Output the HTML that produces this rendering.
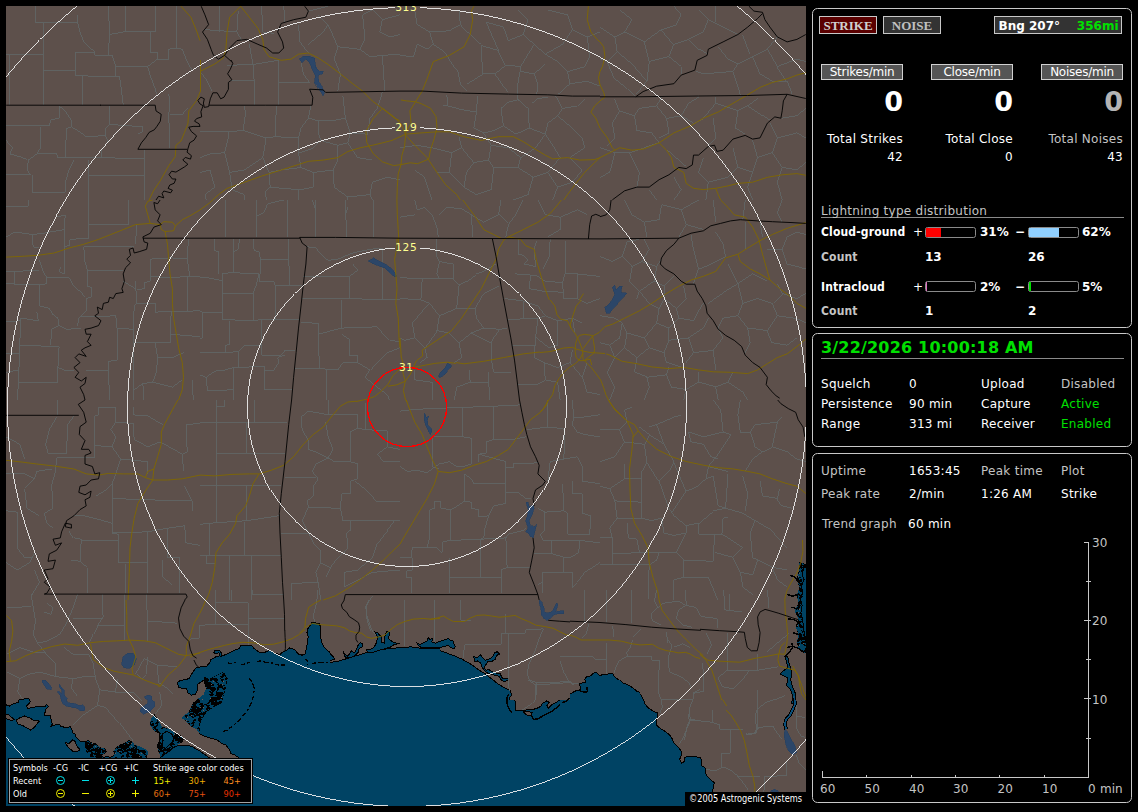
<!DOCTYPE html>
<html><head><meta charset="utf-8"><title>Lightning Detector</title>
<style>
html,body{margin:0;padding:0;background:#000;width:1138px;height:812px;overflow:hidden}
svg{display:block;position:absolute;left:0;top:0}
text{font-family:"DejaVu Sans","Liberation Sans",sans-serif;font-size:12px;fill:#fff}
text{letter-spacing:.27px}
.b{font-weight:bold;letter-spacing:0}
.c{font-family:"DejaVu Sans Condensed","DejaVu Sans",sans-serif;letter-spacing:.15px}
.g{fill:#c4c4c4}
.gr{fill:#00e000}
.lg text{font-family:"DejaVu Sans Condensed","DejaVu Sans","Liberation Sans",sans-serif;font-size:9.1px;letter-spacing:0}
.ax text{fill:#c4c4c4;letter-spacing:0}
.rl{font-size:10.6px;fill:#ffff90;letter-spacing:.65px}
.e{text-anchor:end}
.m{text-anchor:middle}
</style></head><body>
<svg width="1138" height="812" viewBox="0 0 1138 812">
<g id="map">
<defs><clipPath id="mapclip"><rect x="6" y="6" width="800" height="800"/></clipPath>
<pattern id="marsh" width="36" height="36" patternUnits="userSpaceOnUse"><rect width="36" height="36" fill="#004364"/><rect x="1" y="0" width="2" height="1" fill="#000"/><rect x="4" y="0" width="3" height="1" fill="#000"/><rect x="13" y="0" width="3" height="1" fill="#000"/><rect x="18" y="0" width="4" height="1" fill="#000"/><rect x="23" y="0" width="11" height="1" fill="#000"/><rect x="2" y="1" width="4" height="1" fill="#000"/><rect x="7" y="1" width="2" height="1" fill="#000"/><rect x="13" y="1" width="1" height="1" fill="#000"/><rect x="19" y="1" width="1" height="1" fill="#000"/><rect x="24" y="1" width="10" height="1" fill="#000"/><rect x="2" y="2" width="5" height="1" fill="#000"/><rect x="12" y="2" width="3" height="1" fill="#000"/><rect x="20" y="2" width="2" height="1" fill="#000"/><rect x="24" y="2" width="7" height="1" fill="#000"/><rect x="1" y="3" width="6" height="1" fill="#000"/><rect x="8" y="3" width="2" height="1" fill="#000"/><rect x="11" y="3" width="3" height="1" fill="#000"/><rect x="19" y="3" width="2" height="1" fill="#000"/><rect x="23" y="3" width="3" height="1" fill="#000"/><rect x="27" y="3" width="8" height="1" fill="#000"/><rect x="1" y="4" width="2" height="1" fill="#000"/><rect x="6" y="4" width="4" height="1" fill="#000"/><rect x="13" y="4" width="1" height="1" fill="#000"/><rect x="20" y="4" width="16" height="1" fill="#000"/><rect x="1" y="5" width="2" height="1" fill="#000"/><rect x="7" y="5" width="3" height="1" fill="#000"/><rect x="12" y="5" width="2" height="1" fill="#000"/><rect x="22" y="5" width="2" height="1" fill="#000"/><rect x="30" y="5" width="6" height="1" fill="#000"/><rect x="1" y="6" width="1" height="1" fill="#000"/><rect x="10" y="6" width="3" height="1" fill="#000"/><rect x="19" y="6" width="2" height="1" fill="#000"/><rect x="22" y="6" width="2" height="1" fill="#000"/><rect x="31" y="6" width="4" height="1" fill="#000"/><rect x="0" y="7" width="1" height="1" fill="#000"/><rect x="9" y="7" width="3" height="1" fill="#000"/><rect x="18" y="7" width="6" height="1" fill="#000"/><rect x="29" y="7" width="2" height="1" fill="#000"/><rect x="32" y="7" width="2" height="1" fill="#000"/><rect x="0" y="8" width="7" height="1" fill="#000"/><rect x="10" y="8" width="2" height="1" fill="#000"/><rect x="17" y="8" width="2" height="1" fill="#000"/><rect x="22" y="8" width="1" height="1" fill="#000"/><rect x="30" y="8" width="3" height="1" fill="#000"/><rect x="0" y="9" width="10" height="1" fill="#000"/><rect x="11" y="9" width="3" height="1" fill="#000"/><rect x="31" y="9" width="2" height="1" fill="#000"/><rect x="0" y="10" width="7" height="1" fill="#000"/><rect x="12" y="10" width="2" height="1" fill="#000"/><rect x="29" y="10" width="5" height="1" fill="#000"/><rect x="0" y="11" width="6" height="1" fill="#000"/><rect x="7" y="11" width="1" height="1" fill="#000"/><rect x="11" y="11" width="4" height="1" fill="#000"/><rect x="30" y="11" width="3" height="1" fill="#000"/><rect x="35" y="11" width="1" height="1" fill="#000"/><rect x="1" y="12" width="5" height="1" fill="#000"/><rect x="7" y="12" width="2" height="1" fill="#000"/><rect x="11" y="12" width="5" height="1" fill="#000"/><rect x="0" y="13" width="5" height="1" fill="#000"/><rect x="7" y="13" width="3" height="1" fill="#000"/><rect x="13" y="13" width="4" height="1" fill="#000"/><rect x="31" y="13" width="5" height="1" fill="#000"/><rect x="0" y="14" width="6" height="1" fill="#000"/><rect x="7" y="14" width="4" height="1" fill="#000"/><rect x="14" y="14" width="2" height="1" fill="#000"/><rect x="31" y="14" width="5" height="1" fill="#000"/><rect x="0" y="15" width="4" height="1" fill="#000"/><rect x="8" y="15" width="3" height="1" fill="#000"/><rect x="13" y="15" width="3" height="1" fill="#000"/><rect x="17" y="15" width="2" height="1" fill="#000"/><rect x="30" y="15" width="6" height="1" fill="#000"/><rect x="0" y="16" width="1" height="1" fill="#000"/><rect x="11" y="16" width="2" height="1" fill="#000"/><rect x="14" y="16" width="6" height="1" fill="#000"/><rect x="29" y="16" width="7" height="1" fill="#000"/><rect x="0" y="17" width="1" height="1" fill="#000"/><rect x="3" y="17" width="2" height="1" fill="#000"/><rect x="11" y="17" width="9" height="1" fill="#000"/><rect x="29" y="17" width="5" height="1" fill="#000"/><rect x="35" y="17" width="1" height="1" fill="#000"/><rect x="0" y="18" width="5" height="1" fill="#000"/><rect x="9" y="18" width="1" height="1" fill="#000"/><rect x="11" y="18" width="9" height="1" fill="#000"/><rect x="28" y="18" width="2" height="1" fill="#000"/><rect x="31" y="18" width="5" height="1" fill="#000"/><rect x="0" y="19" width="6" height="1" fill="#000"/><rect x="10" y="19" width="2" height="1" fill="#000"/><rect x="13" y="19" width="4" height="1" fill="#000"/><rect x="20" y="19" width="3" height="1" fill="#000"/><rect x="27" y="19" width="2" height="1" fill="#000"/><rect x="31" y="19" width="5" height="1" fill="#000"/><rect x="0" y="20" width="6" height="1" fill="#000"/><rect x="10" y="20" width="1" height="1" fill="#000"/><rect x="12" y="20" width="4" height="1" fill="#000"/><rect x="19" y="20" width="4" height="1" fill="#000"/><rect x="24" y="20" width="3" height="1" fill="#000"/><rect x="31" y="20" width="5" height="1" fill="#000"/><rect x="0" y="21" width="6" height="1" fill="#000"/><rect x="7" y="21" width="2" height="1" fill="#000"/><rect x="13" y="21" width="3" height="1" fill="#000"/><rect x="21" y="21" width="3" height="1" fill="#000"/><rect x="26" y="21" width="4" height="1" fill="#000"/><rect x="34" y="21" width="2" height="1" fill="#000"/><rect x="0" y="22" width="4" height="1" fill="#000"/><rect x="7" y="22" width="3" height="1" fill="#000"/><rect x="11" y="22" width="6" height="1" fill="#000"/><rect x="20" y="22" width="4" height="1" fill="#000"/><rect x="27" y="22" width="2" height="1" fill="#000"/><rect x="33" y="22" width="2" height="1" fill="#000"/><rect x="1" y="23" width="3" height="1" fill="#000"/><rect x="8" y="23" width="2" height="1" fill="#000"/><rect x="11" y="23" width="8" height="1" fill="#000"/><rect x="20" y="23" width="3" height="1" fill="#000"/><rect x="27" y="23" width="3" height="1" fill="#000"/><rect x="8" y="24" width="2" height="1" fill="#000"/><rect x="12" y="24" width="4" height="1" fill="#000"/><rect x="17" y="24" width="6" height="1" fill="#000"/><rect x="26" y="24" width="5" height="1" fill="#000"/><rect x="7" y="25" width="15" height="1" fill="#000"/><rect x="26" y="25" width="2" height="1" fill="#000"/><rect x="6" y="26" width="4" height="1" fill="#000"/><rect x="11" y="26" width="10" height="1" fill="#000"/><rect x="27" y="26" width="2" height="1" fill="#000"/><rect x="6" y="27" width="15" height="1" fill="#000"/><rect x="25" y="27" width="2" height="1" fill="#000"/><rect x="28" y="27" width="1" height="1" fill="#000"/><rect x="4" y="28" width="4" height="1" fill="#000"/><rect x="9" y="28" width="1" height="1" fill="#000"/><rect x="13" y="28" width="6" height="1" fill="#000"/><rect x="21" y="28" width="1" height="1" fill="#000"/><rect x="23" y="28" width="3" height="1" fill="#000"/><rect x="27" y="28" width="2" height="1" fill="#000"/><rect x="5" y="29" width="2" height="1" fill="#000"/><rect x="10" y="29" width="4" height="1" fill="#000"/><rect x="15" y="29" width="3" height="1" fill="#000"/><rect x="19" y="29" width="12" height="1" fill="#000"/><rect x="0" y="30" width="1" height="1" fill="#000"/><rect x="4" y="30" width="1" height="1" fill="#000"/><rect x="9" y="30" width="6" height="1" fill="#000"/><rect x="16" y="30" width="13" height="1" fill="#000"/><rect x="30" y="30" width="6" height="1" fill="#000"/><rect x="0" y="31" width="2" height="1" fill="#000"/><rect x="5" y="31" width="3" height="1" fill="#000"/><rect x="9" y="31" width="3" height="1" fill="#000"/><rect x="14" y="31" width="6" height="1" fill="#000"/><rect x="23" y="31" width="6" height="1" fill="#000"/><rect x="30" y="31" width="6" height="1" fill="#000"/><rect x="0" y="32" width="2" height="1" fill="#000"/><rect x="5" y="32" width="2" height="1" fill="#000"/><rect x="11" y="32" width="2" height="1" fill="#000"/><rect x="14" y="32" width="2" height="1" fill="#000"/><rect x="19" y="32" width="2" height="1" fill="#000"/><rect x="23" y="32" width="1" height="1" fill="#000"/><rect x="25" y="32" width="4" height="1" fill="#000"/><rect x="30" y="32" width="2" height="1" fill="#000"/><rect x="34" y="32" width="2" height="1" fill="#000"/><rect x="0" y="33" width="1" height="1" fill="#000"/><rect x="6" y="33" width="2" height="1" fill="#000"/><rect x="12" y="33" width="2" height="1" fill="#000"/><rect x="19" y="33" width="9" height="1" fill="#000"/><rect x="35" y="33" width="1" height="1" fill="#000"/><rect x="0" y="34" width="2" height="1" fill="#000"/><rect x="18" y="34" width="3" height="1" fill="#000"/><rect x="22" y="34" width="9" height="1" fill="#000"/><rect x="2" y="35" width="1" height="1" fill="#000"/><rect x="14" y="35" width="2" height="1" fill="#000"/><rect x="18" y="35" width="3" height="1" fill="#000"/><rect x="24" y="35" width="8" height="1" fill="#000"/><rect x="20" y="23" width="1" height="1" fill="#6b5c55"/><rect x="30" y="14" width="1" height="1" fill="#6b5c55"/><rect x="33" y="33" width="1" height="1" fill="#6b5c55"/><rect x="31" y="0" width="1" height="1" fill="#6b5c55"/><rect x="23" y="26" width="1" height="1" fill="#6b5c55"/><rect x="6" y="0" width="1" height="1" fill="#6b5c55"/><rect x="22" y="15" width="1" height="1" fill="#6b5c55"/><rect x="23" y="23" width="1" height="1" fill="#6b5c55"/><rect x="19" y="13" width="1" height="1" fill="#6b5c55"/><rect x="3" y="20" width="1" height="1" fill="#6b5c55"/><rect x="11" y="31" width="1" height="1" fill="#6b5c55"/><rect x="7" y="33" width="1" height="1" fill="#6b5c55"/><rect x="22" y="3" width="1" height="1" fill="#6b5c55"/><rect x="5" y="13" width="1" height="1" fill="#6b5c55"/></pattern>
<clipPath id="k0"><rect x="0" y="660" width="130" height="100"/></clipPath>
<clipPath id="k1"><rect x="130" y="660" width="130" height="100"/></clipPath>
<clipPath id="k2"><rect x="190" y="630" width="140" height="30"/></clipPath>
<clipPath id="k3"><rect x="260" y="660" width="70" height="70"/></clipPath>
<clipPath id="k4"><rect x="330" y="600" width="110" height="100"/></clipPath>
<clipPath id="k5"><rect x="300" y="600" width="30" height="30"/></clipPath>
<clipPath id="k6"><rect x="440" y="600" width="130" height="100"/></clipPath>
<clipPath id="k7"><rect x="500" y="700" width="70" height="80"/></clipPath>
<clipPath id="k8"><rect x="570" y="680" width="70" height="100"/></clipPath>
<clipPath id="k9"><rect x="570" y="640" width="130" height="40"/></clipPath>
<clipPath id="k10"><rect x="640" y="680" width="60" height="60"/></clipPath>
<clipPath id="k11"><rect x="640" y="740" width="120" height="66"/></clipPath>
</defs>
<g clip-path="url(#mapclip)" shape-rendering="crispEdges">
<rect x="6" y="6" width="800" height="800" fill="#5d504b"/>
<path clip-path="url(#k0)" d="M4.9 704.3 L9.2 706.2 L13.5 703.7 L18.5 702.5 L19.1 699.4 L22.2 700 L24.6 698.4 L28.9 698.8 L30.2 701.3 L28.9 703.7 L26.5 706.2 L27.7 708.6 L32 707.4 L38.2 706.5 L45.6 706.2 L46.2 704.1 L48.6 706.5 L46.2 708.6 L44.9 712.9 L44.3 716 L47.4 715.4 L50.5 715.4 L51.1 719.1 L52.3 724 L50.5 726.5 L54.2 725.3 L59.1 724 L61 726.5 L64 727.1 L67.1 727.7 L70.2 726.5 L72 729.6 L72.7 732.7 L75.1 733.9 L76.3 737.6 L78.8 740 L81.3 741.9 L85 741.3 L88.7 740.7 L91.7 743.1 L95.4 743.7 L97.9 746.2 L101 748 L104.7 748.7 L106.5 751.7 L104.1 753.6 L101 754.8 L103.4 757.3 L107.1 756.7 L110.8 757.3 L114.5 754.8 L113.9 751.1 L116.4 748 L120.1 745 L123.1 744.3 L126.2 742.5 L128.7 740.7 L132.4 741.3 L135.5 743.7 L140 745 L145.3 745 L145.3 770.8 L-4.9 770.8 L-4.9 704.3Z" fill="#004364" stroke="#000" stroke-width="1"/>
<path d="M16 720.3 L19.7 717.9 L24.6 716 L29.6 717.9 L33.9 720.3 L39.4 721 L36.9 724 L34.5 727.1 L30.8 730.2 L26.5 727.7 L22.2 725.3 L17.9 724.0Z" fill="#5d504b" stroke="#000" stroke-width="1"/>
<path d="M4.9 713.6 L8.6 714.8 L12.3 717.9 L14.2 719.7 L11.1 720.6 L7.4 719.1 L4.9 718.5Z" fill="#5d504b" stroke="#000" stroke-width="1"/>
<path d="M65.3 742.5 L69 743.7 L72.7 740 L75.1 741.3 L77 746.2 L80 749.9 L76.3 751.7 L72.7 751.1 L69 748 L66.5 745.0Z" fill="#5d504b" stroke="#000" stroke-width="1"/>
<path clip-path="url(#k1)" d="M211.7 657.5 L262.8 657.5 L262.8 762.2 L238.2 762.2 L238.2 757.3 L234.5 754.8 L230.8 753.6 L229.6 749.9 L225.9 745 L222.2 743.7 L217.3 740 L213.6 738.8 L208.7 737.6 L205 736.3 L200 733.9 L198.8 726.5 L201.3 719.1 L206.2 711.7 L213.6 706.8 L221 703.1 L224.7 690.8 L227.1 678.5 L223.4 672.3 L216 676 L208.7 679.7 L205 677.2 L204.3 680.3 L201.3 681.5 L197.6 684.6 L197 691.4 L195.1 694.5 L191.4 695.1 L187.7 692.6 L186.5 688.3 L182.8 688.9 L178.5 687.1 L177.3 682.8 L180.3 680.3 L185.3 679.7 L189 678.5 L192.7 672.3 L196.3 667.4 L201.3 666.8 L206.2 666.8 L209.9 662.5Z" fill="#004364" stroke="#000" stroke-width="1"/>
<path clip-path="url(#k1)" d="M205 677.2 L208.7 679.7 L216 676 L223.4 672.3 L227.1 678.5 L224.7 690.8 L221 703.1 L213.6 706.8 L206.2 711.7 L201.3 719.1 L198.8 726.5 L200 733.9 L196.3 729 L191.4 726.5 L186.5 721.6 L181.6 717.9 L184 715.4 L189 711.7 L192.7 703.1 L198.8 698.2 L203.7 694.5 L206.2 688.3 L204.3 683.4Z" fill="url(#marsh)" stroke="none" stroke-width="1"/>
<path clip-path="url(#k1)" d="M149.6 724 L151.4 717.9 L154.5 714.2 L156.9 717.9 L161.9 726.5 L169.3 729 L174.2 732.7 L180.3 735.1 L184 740 L181.6 742.5 L175.4 746.2 L169.3 751.1 L160.6 757.3 L158.2 751.1 L156.9 745 L159.4 740 L159.4 733.9 L153.2 730.2Z" fill="url(#marsh)" stroke="none" stroke-width="1"/>
<path clip-path="url(#k1)" d="M161.9 733.9 L166.8 731.4 L171.7 733.9 L174.2 738.8 L170.5 743.7 L165.6 748.7 L161.9 746.2 L163.1 740.0Z" fill="#004364" stroke="#000" stroke-width="1"/>
<path clip-path="url(#k1)" d="M160.6 762.2 L160.6 757.3 L169.3 751.1 L175.4 746.2 L184 745 L191.4 746.2 L200 751.1 L208.7 757.3 L216 762.2Z" fill="#004364" stroke="#000" stroke-width="1"/>
<path clip-path="url(#k1)" d="M117.5 745 L124.9 743.7 L128.6 741.3 L132.3 741.3 L134.8 745 L139.7 746.2 L144.6 748.7 L148.3 751.7 L147.1 757.3 L145.9 762.2 L117.5 762.2Z" fill="url(#marsh)" stroke="none" stroke-width="1"/>
<path clip-path="url(#k2)" d="M187.5 674.3 L190 673.1 L192.5 669.4 L197.4 666.9 L204.8 666.3 L208.5 663.2 L210.9 659.6 L216.5 656.5 L219.6 655.9 L218.9 652.8 L216.5 653.4 L213.4 652.8 L214.6 650.9 L219.6 650.3 L222 654 L220.8 656.5 L226.9 654 L233.1 650.9 L239.3 648.5 L240.5 645.4 L251.6 645.4 L254 648.5 L260.2 652.8 L265.1 652.2 L270 650.3 L275 653.4 L279.9 654.6 L282.4 652.2 L287.3 649.7 L289.7 647.9 L294.7 649.7 L298.4 654 L302.1 655.2 L305.1 654 L306.4 648.5 L307.6 642.3 L308.2 636.2 L307 632.5 L308.2 627.5 L320.5 627.5 L320.5 636.2 L321.8 642.3 L324.2 647.2 L326.7 649.7 L332.8 654.6 L332.8 732.2 L187.5 732.2Z" fill="#004364" stroke="#000" stroke-width="1"/>
<path clip-path="url(#k3)" d="M187.5 674.3 L190 673.1 L192.5 669.4 L197.4 666.9 L204.8 666.3 L208.5 663.2 L210.9 659.6 L216.5 656.5 L219.6 655.9 L218.9 652.8 L216.5 653.4 L213.4 652.8 L214.6 650.9 L219.6 650.3 L222 654 L220.8 656.5 L226.9 654 L233.1 650.9 L239.3 648.5 L240.5 645.4 L251.6 645.4 L254 648.5 L260.2 652.8 L265.1 652.2 L270 650.3 L275 653.4 L279.9 654.6 L282.4 652.2 L287.3 649.7 L289.7 647.9 L294.7 649.7 L298.4 654 L302.1 655.2 L305.1 654 L306.4 648.5 L307.6 642.3 L308.2 636.2 L307 632.5 L308.2 627.5 L320.5 627.5 L320.5 636.2 L321.8 642.3 L324.2 647.2 L326.7 649.7 L332.8 654.6 L332.8 732.2 L187.5 732.2Z" fill="#004364" stroke="#000" stroke-width="1"/>
<path clip-path="url(#k4)" d="M297.5 657.9 L304.9 661.6 L308.6 665.3 L312.3 664.3 L319.7 663 L327.1 662.6 L336.9 661.6 L343.1 659.7 L349.3 657.9 L355.4 656 L361.6 654.2 L367.7 652.3 L373.9 651.1 L380 649.9 L386.2 649 L392.4 648.3 L398.5 647.8 L404.7 647.4 L410.8 646.8 L417 647.8 L423.1 648.6 L429.3 648.3 L435.5 648.6 L442.8 649.3 L442.8 702.2 L297.5 702.2Z" fill="#004364" stroke="#000" stroke-width="1"/>
<path clip-path="url(#k4)" d="M297.5 651.1 L300 651.1 L303.7 652.9 L305.5 650.5 L306.2 645.6 L306.8 639.4 L308.6 633.2 L307.4 629.6 L309.2 626.5 L312.3 622.2 L314.8 622.8 L319.7 624 L320.9 629.6 L321.5 635.7 L320.3 640.6 L322.2 645.6 L326.5 647.4 L327.7 650.5 L330.8 654.2 L333.9 657.3 L334.5 659.7 L329.6 660.3 L324.6 661.6 L319.7 661 L314.8 663 L311.1 664 L307.4 664 L303.7 661 L297.5 657.9Z" fill="#004364" stroke="#000" stroke-width="1"/>
<path clip-path="url(#k5)" d="M297.5 657.9 L304.9 661.6 L308.6 665.3 L312.3 664.3 L319.7 663 L327.1 662.6 L336.9 661.6 L343.1 659.7 L349.3 657.9 L355.4 656 L361.6 654.2 L367.7 652.3 L373.9 651.1 L380 649.9 L386.2 649 L392.4 648.3 L398.5 647.8 L404.7 647.4 L410.8 646.8 L417 647.8 L423.1 648.6 L429.3 648.3 L435.5 648.6 L442.8 649.3 L442.8 702.2 L297.5 702.2Z" fill="#004364" stroke="#000" stroke-width="1"/>
<path clip-path="url(#k5)" d="M297.5 651.1 L300 651.1 L303.7 652.9 L305.5 650.5 L306.2 645.6 L306.8 639.4 L308.6 633.2 L307.4 629.6 L309.2 626.5 L312.3 622.2 L314.8 622.8 L319.7 624 L320.9 629.6 L321.5 635.7 L320.3 640.6 L322.2 645.6 L326.5 647.4 L327.7 650.5 L330.8 654.2 L333.9 657.3 L334.5 659.7 L329.6 660.3 L324.6 661.6 L319.7 661 L314.8 663 L311.1 664 L307.4 664 L303.7 661 L297.5 657.9Z" fill="#004364" stroke="#000" stroke-width="1"/>
<path clip-path="url(#k4)" d="M343.1 651.7 L344.9 654.2 L347.4 656 L349.3 654.2 L351.7 650.5 L354.2 652.9 L356.6 649.3 L357.9 645.6 L360.3 642.5 L362.8 643.7 L362.2 646.8 L359.1 648.6 L357.9 652.9 L354.2 656 L349.3 657.9 L345.6 657.9Z" fill="#004364" stroke="#000" stroke-width="1"/>
<path clip-path="url(#k4)" d="M366.5 649.9 L370.2 649.3 L373.9 647.4 L376.3 643.1 L377.6 636.9 L375.1 632 L377.6 632.6 L380 635.7 L381.3 636.9 L381.9 642.5 L384.3 643.1 L385 636.3 L386.2 632 L388.7 631.4 L389.9 634.5 L388 638.2 L392.4 641.9 L398.5 643.7 L393.6 644.9 L389.9 647.4 L385 648.6 L378.8 650.5 L372.7 652.3 L367.7 652.9Z" fill="#004364" stroke="#000" stroke-width="1"/>
<path clip-path="url(#k4)" d="M417 643.1 L420.1 644.3 L423.1 643.1 L426.8 641.3 L428.1 637.6 L429.9 639.4 L432.4 638.2 L431.8 641.9 L435.5 643.1 L440 641.3 L442.8 641.3 L442.8 647.4 L435.5 648 L428.1 647.4 L421.9 648 L418.2 645.6Z" fill="#004364" stroke="#000" stroke-width="1"/>
<path clip-path="url(#k6)" d="M427.5 647.4 L430 647.8 L437.4 649.9 L444.8 652.3 L454.6 656 L462 659.1 L470.6 664 L479.3 670.2 L485.4 673.9 L491.6 678.8 L497.7 683.7 L503.9 687.4 L510 690.5 L511.9 694.8 L510 697.3 L508.8 702.2 L427.5 702.2Z" fill="#004364" stroke="#000" stroke-width="1"/>
<path clip-path="url(#k6)" d="M427.5 641.3 L430 638.2 L431.8 640.6 L434.9 643.1 L438.6 641.9 L442.3 640.6 L446 639.4 L448.5 638.2 L450.3 640.6 L452.8 640 L453.4 643.1 L455.2 646.2 L454.6 648.6 L451.5 648 L448.5 645.6 L444.8 646.2 L441.1 647.4 L437.4 648.6 L433.7 648 L427.5 647.4Z" fill="#004364" stroke="#000" stroke-width="1"/>
<path clip-path="url(#k6)" d="M473.7 656.6 L476.8 657.9 L480.5 654.8 L482.3 657.3 L485.4 660.3 L489.1 659.1 L492.8 656.6 L494.6 652.9 L497.1 651.7 L499.6 654.2 L496.5 655.4 L495.3 659.1 L491.6 661.6 L487.9 661.6 L485.4 665.3 L484.2 667.7 L486 670.2 L489.1 669.6 L491.6 671.4 L496.5 673.3 L500.2 673.9 L502.7 678.8 L508.2 678.2 L508.8 680 L503.9 681.9 L501.4 680 L499 676.3 L494 675.1 L490.3 673.9 L486.6 672.7 L484.2 670.2 L481.7 666.5 L480.5 662.8 L477.4 661 L474.9 661.6Z" fill="#004364" stroke="#000" stroke-width="1"/>
<path d="M253 730 L330 730 L330 700 L500 700 L500 820 L253 820.0Z" fill="#004364" stroke="none" stroke-width="1"/>
<path d="M500 700 L570 700 L570 780 L500 780.0Z" fill="#004364" stroke="none" stroke-width="1"/>
<path clip-path="url(#k7)" d="M497.5 677.5 L497.5 684.9 L503.7 687.4 L507.4 691.1 L509.2 693.5 L512.3 695.4 L514.8 698.5 L515.4 704.6 L515.4 710.2 L520.9 710.8 L528.3 709.6 L535.7 708.9 L540.6 706.5 L542.5 703.4 L546.8 700.9 L549.3 702.2 L546.8 705.9 L548 708.3 L551.7 704.6 L556.6 702.2 L561.6 698.5 L569 694.8 L575.1 691.1 L580 689.9 L580 686.2 L578.8 683.7 L585 682.5 L586.2 677.5Z" fill="#5d504b" stroke="#000" stroke-width="1"/>
<path clip-path="url(#k7)" d="M618.2 677.5 L623.1 683.1 L628.1 684.9 L633 688 L636.7 691.1 L642.8 693.5 L642.8 677.5Z" fill="#5d504b" stroke="#000" stroke-width="1"/>
<path d="M570 680 L640 680 L640 780 L570 780.0Z" fill="#004364" stroke="none" stroke-width="1"/>
<path clip-path="url(#k8)" d="M497.5 677.5 L497.5 684.9 L503.7 687.4 L507.4 691.1 L509.2 693.5 L512.3 695.4 L514.8 698.5 L515.4 704.6 L515.4 710.2 L520.9 710.8 L528.3 709.6 L535.7 708.9 L540.6 706.5 L542.5 703.4 L546.8 700.9 L549.3 702.2 L546.8 705.9 L548 708.3 L551.7 704.6 L556.6 702.2 L561.6 698.5 L569 694.8 L575.1 691.1 L580 689.9 L580 686.2 L578.8 683.7 L585 682.5 L586.2 677.5Z" fill="#5d504b" stroke="#000" stroke-width="1"/>
<path clip-path="url(#k8)" d="M618.2 677.5 L623.1 683.1 L628.1 684.9 L633 688 L636.7 691.1 L642.8 693.5 L642.8 677.5Z" fill="#5d504b" stroke="#000" stroke-width="1"/>
<path d="M523.4 712 L528.3 711.4 L532 712.6 L531.4 715.7 L528.3 715.7 L525.2 713.9Z" fill="#5d504b" stroke="#000" stroke-width="1"/>
<path clip-path="url(#k9)" d="M557.5 697.9 L560 697.3 L566.2 694.2 L572.3 691.1 L578.5 689.3 L580.3 691.7 L584.6 692.9 L587.7 691.7 L586.5 688 L584 686.8 L579.7 686.2 L578.5 683.7 L582.8 683.1 L584.6 679.4 L586.5 676.9 L590.8 675.7 L593.2 673.2 L596.9 672.6 L599.4 675.7 L603.1 674.5 L609.3 673.9 L612.9 673.9 L614.2 676.3 L617.9 679.4 L622.8 682.5 L627.7 684.3 L632.7 687.4 L637.6 690.5 L641.3 695.4 L643.7 700.3 L645 704 L648.7 708.3 L653.6 711.4 L657.3 712.7 L657.9 716.3 L656 720 L656.7 725 L659.7 728 L664.7 731.1 L669.6 734.8 L672.1 738.5 L672.7 742.2 L557.5 742.2Z" fill="#004364" stroke="#000" stroke-width="1"/>
<path clip-path="url(#k10)" d="M557.5 697.9 L560 697.3 L566.2 694.2 L572.3 691.1 L578.5 689.3 L580.3 691.7 L584.6 692.9 L587.7 691.7 L586.5 688 L584 686.8 L579.7 686.2 L578.5 683.7 L582.8 683.1 L584.6 679.4 L586.5 676.9 L590.8 675.7 L593.2 673.2 L596.9 672.6 L599.4 675.7 L603.1 674.5 L609.3 673.9 L612.9 673.9 L614.2 676.3 L617.9 679.4 L622.8 682.5 L627.7 684.3 L632.7 687.4 L637.6 690.5 L641.3 695.4 L643.7 700.3 L645 704 L648.7 708.3 L653.6 711.4 L657.3 712.7 L657.9 716.3 L656 720 L656.7 725 L659.7 728 L664.7 731.1 L669.6 734.8 L672.1 738.5 L672.7 742.2 L557.5 742.2Z" fill="#004364" stroke="#000" stroke-width="1"/>
<path d="M500 780 L640 780 L640 820 L500 820.0Z" fill="#004364" stroke="none" stroke-width="1"/>
<path clip-path="url(#k11)" d="M617.5 707.5 L649.6 707.5 L649.6 710 L655.7 712.5 L656.9 717.4 L656.3 723.5 L658.2 727.9 L663.1 730.9 L668 734 L671.1 738.3 L674.2 743.2 L677.9 746.9 L681 750.6 L681.6 754.3 L679.7 759.3 L681.6 762.9 L684 761.7 L684 757.4 L689 756.2 L695.1 756.8 L700 757.4 L701.9 760.5 L701.3 765.4 L705 767.9 L705 772.8 L707.4 776.5 L711.1 780.2 L714.2 782.7 L713.6 786.3 L712.4 791.9 L712.4 812.2 L617.5 812.2Z" fill="#004364" stroke="#000" stroke-width="1"/>
<path d="M799.5 561.7 L806.1 564.6 L810.4 564.6 L810.4 653.3 L804.5 653.3 L799.5 650.4 L796.6 642.5 L798.6 634.6 L795.6 626.7 L798.6 618.8 L794.6 611 L798.6 603.1 L796.6 595.2 L799.5 587.3 L796.6 579.4 L798.6 571.5Z" fill="url(#marsh)" stroke="none" stroke-width="1"/>
<path d="M810.4 565.6 L803.5 567.6 L802.5 575.5 L804.1 579.4 L801.5 585.3 L802.5 593.2 L800.5 599.1 L802.1 605.1 L800.9 612.9 L802.5 618.8 L803.5 626.7 L804.5 634.6 L806.1 638.6 L810.4 638.6Z" fill="#004364" stroke="#000" stroke-width="1"/>
<path d="M784.8 656.3 L786.7 662.2 L787.7 668.1 L782.8 671.1 L779.8 674 L783.8 676 L787.7 678 L786.7 685.9 L790.7 689.8 L792.6 695.7 L791.7 703.6 L795.6 703.6 L795.6 693.8 L792.6 686.9 L790.7 680 L791.7 674 L790.7 668.1 L788.7 662.2 L787.7 656.3Z" fill="#004364" stroke="#000" stroke-width="1"/>
<path clip-path="url(#k0)" d="M85 741.3 L91.7 743.1 L97.9 746.2 L104.7 748.7 L106.5 751.7 L104.1 753.6 L101 754.8 L103.4 757.3 L93.6 758.5 L88.7 756 L86.2 751.1 L85 746.2Z" fill="url(#marsh)" stroke="none" stroke-width="1"/>
<path clip-path="url(#k0)" d="M114.5 754.8 L113.9 751.1 L116.4 748 L120.1 745 L126.2 742.5 L132.4 741.3 L140 745 L140 760 L114.5 760.0Z" fill="url(#marsh)" stroke="none" stroke-width="1"/>
<path d="M0 760 L260 760 L260 820 L0 820.0Z" fill="#004364" stroke="none" stroke-width="1"/>
<path d="M404.7 600 L404.7 645.6 M434.8 600 L434.8 640.6 M369 600 L365.9 607.4 L366.5 614.8 L369 622.2 L371.4 629.6 L375.1 634.5 M434.7 600 L434.7 641.9 M460.5 600 L460.5 620.3 L470.6 620.3 M505.7 613.5 L505.7 633.2 L508.8 633.9 L508.8 686.2 M505.7 633.2 L501.4 633.5 L501.4 644.3 L464.5 644.9 L463.2 657.9 M508.8 633.9 L524.8 633.2 L526 629.6 L543.3 628.9 M543.3 628.9 L538.4 640.6 L534.7 651.7 L528.5 665.3 L527.3 673.9 L529.7 681.3 L535.9 685 L535.9 700.0 M535.9 685 L570 682.5 M508.6 680 L509.2 691.1 M528.3 680 L536.9 682.5 L569 681.8 L573.9 684.9 M536.9 682.5 L535.7 698.5 L532 703.4 L522.2 710.2 M606.2 642.5 L606.8 673.9 M560 656 L593.2 656.6 L595.1 659.1 L606.2 659.1 M632.7 640 L630.2 647.4 L626.5 652.9 L627.7 656 L651.1 656 L651.7 660.3 L659.7 660.9 L658.5 676.9 L658.5 692.9 L661 699.1 L693 699.1 M627.7 656 L619.1 660.9 L615.4 668.3 L614.2 673.2 M661 699.1 L662.2 706.5 L659.7 712.7 M668.4 640 L672.1 646.2 L669 654.8 L668.4 664.6 L669.6 672 L675.7 674.5 L683.1 678.2 L689.3 683.1 L690.5 686.8 M700 689.3 L693 692.9 L693 699.1 L689.3 709 L688.7 718.8 L690.5 720 L700 720.0 M690.5 720 L686.8 728.7 L684.4 740.0 M560 660.9 L563.7 672 L568.6 680.6 L573.5 683.7 L578.5 683.7 M689 710 L690.2 718.6 L686.5 728.5 L682.8 738.3 L679.1 743.9 M690.2 719.2 L701.3 721.1 L712.4 722.3 L712.4 710.0 M712.4 722.3 L719.7 724.8 L719.7 729.1 L730.8 729.7 L743.1 729.7 M730.8 729.7 L730.2 753.1 L721.6 753.1 L721.6 767.9 L724.7 767.3 L730.8 770.3 L737 775.3 L743.1 782.7 L748.1 790.0 M706.2 769.1 L714.8 771 L721.6 767.9 M738.2 776.5 L760 776.5 M757.3 710 L757.3 728.5 L760 727.2 M745.6 732.2 L748.1 734.6 L755.5 733.4 L757.3 728.5 M35.7 6.2 L35.7 22.7 L43.1 22.7 L43.1 104.7 M35.7 22.7 L77.6 22.7 M77.6 14.8 L77.6 22.7 L80 32 L83.7 41.9 L89.9 48 L94.8 51.7 M75.1 52.2 L94.8 52.2 L94.8 55.4 L112.1 55.4 L115.8 66.5 L115.8 76.4 M75.1 52.2 L75.1 75.1 L82.5 75.9 L115.8 76.8 L119.5 76.8 L121.9 93.6 L123.2 104.7 M43.1 70.2 L75.1 70.2 M82.5 75.9 L82.5 104.7 M6.2 54.7 L43.1 54.7 M9.9 54.7 L9.9 104.7 M108.4 6.2 L109.6 34.5 L108.4 49.3 L108.4 55.4 M125.6 6.2 L125.6 31.5 L155.2 32 L155.2 6.2 M109.6 34.5 L125.6 31.5 M150.2 32 L150.2 52.2 L157.6 53 L157.6 59.1 L147.8 66.5 L115.8 66.5 M147.8 66.5 L151.5 78.8 L155.2 88.7 L156.4 93.6 M176.1 6.2 L176.1 48 L168.7 49.3 L168.7 59.1 L157.6 59.1 M176.1 48 L182.3 49.3 L187.2 61.6 L192.1 70.2 M168.7 93.6 L170 104.7 L168.7 114.5 L170 147.8 M170 114.5 L182.3 114.5 L187.2 108.4 M59.1 105.9 L59.1 118.2 L50.5 119.5 L49.3 125.6 L6.2 125.6 M59.1 105.9 L65.3 110.8 L71.4 120.7 L71.4 126.8 L66.5 128.1 L65.3 157.6 L57.9 157.6 L56.7 153.9 L36.9 153.9 L28.3 160.1 L27.1 170 L30.8 174.9 L6.2 174.9 M40.6 126.8 L40.6 147.8 L36.9 153.9 M71.4 126.8 L81.3 133 L86.2 136.7 L105.9 135.5 L105.9 128.1 L109.6 124.4 M109.6 105.9 L109.6 124.4 L142.9 126.8 L142.9 131.8 L137.9 134.2 M105.9 135.5 L108.4 141.6 L101 150.2 L101 157.6 L65.3 157.6 M101 157.6 L144.1 158.9 M88.7 160.1 L88.7 200.0 M88.7 175.4 L144.1 175.4 M144.1 150.2 L144.1 200.0 M73.9 160.1 L69 170 L65.3 182.3 L65.3 192.1 L32 192.1 L32 175.4 M6.2 140.4 L12.3 147.8 L9.9 153.9 L18.5 156.4 L27.1 160.1 M219.7 6.2 L219.7 32.0 M238.2 11.1 L236.9 32 L241.9 40.6 M261.6 6.2 L262.8 32 L273.9 33.3 M283.7 6.2 L285 22.2 M204.9 29.6 L236.9 32.0 M298.5 24.6 L299.8 41.9 L308.4 53.0 M308.4 11.1 L328.1 6.2 M318.2 14.8 L328.1 24.6 L323.2 32 L308.4 44.3 M328.1 24.6 L337.9 46.8 L334.2 59.1 L340.4 73.9 L337.9 91.1 M337.9 46.8 L360.1 49.3 L365 39.4 L362.6 14.8 L372.4 9.9 M360.1 49.3 L370 56.7 L382.3 55.4 L383.5 71.4 L384.7 91.1 M382.3 55.4 L400 54.2 M372.4 9.9 L382.3 19.7 L400 14.8 M382.3 19.7 L379.8 32 L389.7 36.9 L400 34.5 M227.1 65.3 L253 64.5 L254.2 80 L254.2 104.7 M253 64.5 L249.3 44.3 M229.6 80 L254.2 80.0 M253 64.5 L278.8 60.3 L278.8 104.7 M278.8 82.5 L309.6 82.5 M301 62.8 L303.4 73.9 L309.6 82.5 M200 71.4 L207.4 81.3 L212.3 91.1 M244.3 105.9 L245.6 113.3 L243.1 130.5 L228.3 131.8 L228.3 137.9 L224.6 152.7 L209.9 153.9 L200 157.6 M200 131.8 L228.3 131.8 M276.4 105.9 L275.1 136.7 L265.3 137.9 L265.3 142.9 L262.8 157.6 L244.3 170 L229.6 172.4 L224.6 152.7 M243.1 130.5 L265.3 137.9 M275.1 136.7 L298.5 137.9 L301 128.1 L308.4 118.2 L310.8 105.9 M308.4 118.2 L318.2 120.7 L318.2 133 L320.7 140.4 L313.3 147.8 L298.5 152.7 L298.5 137.9 M318.2 120.7 L333 120.7 L345.3 118.2 L342.9 96.1 M345.3 118.2 L350.2 133 L347.8 142.9 L337.9 145.3 L320.7 140.4 M350.2 133 L367.5 134.2 L370 118.2 L377.3 108.4 L382.3 92.4 M298.5 152.7 L301 167.5 L281.3 170 L269 172.4 L262.8 157.6 M301 167.5 L313.3 172.4 L333 170 L337.9 160.1 L337.9 145.3 M333 170 L334.2 187.2 L347.8 197 L347.8 200.0 M347.8 142.9 L357.6 157.6 L372.4 160.1 M269 172.4 L270.2 187.2 L265.3 192.1 L266.5 200.0 M229.6 172.4 L232 189.7 L244.3 194.6 L244.3 200.0 M200 172.4 L209.9 170 L214.8 187.2 L204.9 194.6 L206.2 200.0 M270.2 187.2 L298.5 189.7 L298.5 200.0 M298.5 189.7 L313.3 187.2 L313.3 172.4 M347.8 197 L370 194.6 L372.4 182.3 L387.2 177.3 L400 179.8 M370 194.6 L372.4 200.0 M414.8 11.1 L417.2 24.6 L429.6 32 L433.3 44.3 L427.1 49.3 L417.2 44.3 L413.5 56.7 L400 55.4 M429.6 32 L449.3 30.8 L460.3 24.6 L459.1 9.9 M433.3 44.3 L444.3 51.7 L453 65.3 L457.9 71.4 L460.3 83.7 L466.5 91.1 M460.3 24.6 L466.5 32 L481.3 45.6 L482.5 73.9 L466.5 83.7 M481.3 45.6 L498.5 50.5 L505.9 65.3 L494.8 73.9 L482.5 73.9 M486.2 22.2 L498.5 50.5 M486.2 22.2 L503.4 27.1 L508.4 40.6 L523.2 34.5 L534.2 44.3 L520.7 66.5 L505.9 65.3 M494.8 73.9 L503.4 86.2 L508.4 92.4 M520.7 66.5 L518.2 81.3 L517 93.6 M520.7 71.4 L534.2 73.9 L537.9 85 L536.7 94.8 M534.2 44.3 L545.3 54.2 L557.6 61.6 L567.5 71.4 L570 83.7 L557.6 94.8 M545.3 54.2 L562.6 44.3 L572.4 29.6 L567.5 14.8 L547.8 9.9 M572.4 29.6 L587.2 36.9 L589.7 56.7 L584.7 66.5 L567.5 71.4 M534.2 73.9 L545.3 64.0 M523.2 34.5 L528.1 19.7 L518.2 9.9 M587.2 36.9 L600 32.0 M570 83.7 L587.2 81.3 L600 86.2 M446.8 94.8 L448 105.9 L461.6 109.6 L476.4 112.1 L477.6 96.1 M443.1 105.9 L448 105.9 M476.4 112.1 L473.9 128.1 L483.7 133 L493.6 130.5 L503.4 125.6 L501 108.4 L508.4 102.2 L518.2 99.8 L517 94.8 M518.2 99.8 L528.1 108.4 L529.3 128.1 L515.8 134.2 M503.4 125.6 L515.8 134.2 M529.3 128.1 L545.3 134.2 L547.8 123.2 L557.6 115.8 L562.6 108.4 L557.6 98.5 L555.2 96.1 M531.8 103.4 L537.9 98.5 L547.8 97.3 M557.6 115.8 L572.4 128.1 L582.3 137.9 L584.7 147.8 L570 157.6 M562.6 108.4 L577.3 105.9 L584.7 98.5 M545.3 134.2 L552.7 145.3 L560.1 157.6 M459.1 136.7 L461.6 147.8 L451.7 152.7 L432 147.8 M461.6 147.8 L473.9 162.6 L488.7 160.1 L491.1 145.3 L483.7 133.0 M491.1 145.3 L508.4 147.8 L520.7 157.6 L518.2 167.5 L493.6 167.5 L488.7 160.1 M520.7 157.6 L535.5 147.8 L545.3 134.2 M473.9 162.6 L466.5 172.4 L464 187.2 L476.4 194.6 L491.1 189.7 L493.6 167.5 M518.2 167.5 L533 177.3 L547.8 172.4 L560.1 157.6 M533 177.3 L528.1 194.6 L513.3 200.0 M547.8 172.4 L557.6 187.2 L572.4 182.3 L582.3 170 L570 157.6 M557.6 187.2 L552.7 200.0 M451.7 152.7 L449.3 172.4 L436.9 172.4 M449.3 172.4 L464 187.2 M414.8 170 L424.6 177.3 L432 200.0 M400 147.8 L417.2 145.3 L432 147.8 M600 27.1 L614.8 36.9 L624.6 32 L632 19.7 L619.7 9.8 M624.6 32 L644.3 41.9 L649.2 61.5 L646.8 81.2 L636.9 93.5 M644.3 41.9 L661.5 29.5 L676.3 24.6 L681.2 14.8 L673.9 6.2 M649.2 61.5 L668.9 56.6 L673.9 44.3 L661.5 29.5 M673.9 44.3 L688.6 39.4 L703.4 32 L708.3 19.7 L698.5 9.8 M688.6 39.4 L698.5 49.2 L707.1 54.2 M668.9 56.6 L681.2 66.5 L681.2 73.9 M708.3 19.7 L723.1 27.1 L737.9 34.5 M614.8 36.9 L617.2 51.7 L607.4 61.5 L600 59.1 M617.2 51.7 L632 64 L646.8 81.2 M607.4 61.5 L614.8 78.8 L627.1 88.6 L634.5 96.0 M715.7 6.2 L715.7 22.2 M718.2 46.8 L728 59.1 L737.9 64 L732.9 71.4 L703.4 73.9 L696 71.4 M732.9 71.4 L737.9 86.2 L740.3 94.8 M737.9 64 L752.6 56.6 L767.4 49.2 L777.3 36.9 M742.8 34.5 L750.2 54.2 M767.4 49.2 L777.3 66.5 L787.1 81.2 L792 93.5 M777.3 66.5 L796.9 59.1 L805.8 61.5 M752.6 56.6 L760 73.9 L772.3 81.2 L787.1 81.2 M614.8 98.5 L619.7 110.8 L634.5 115.7 L639.4 108.3 L656.6 105.9 L661.5 97.2 M619.7 110.8 L612.3 123.1 L614.8 137.9 L607.4 145.2 M634.5 115.7 L636.9 130.5 L651.7 132.9 L659.1 142.8 M656.6 105.9 L666.5 118.2 L681.2 115.7 L688.6 103.4 L698.5 97.2 M666.5 118.2 L668.9 132.9 L659.1 137.9 M681.2 115.7 L693.5 123.1 L703.4 118.2 L715.7 103.4 L715.7 97.2 M713.2 118.2 L715.7 137.9 L708.3 145.2 M715.7 103.4 L737.9 110.8 L747.7 105.9 L757.6 98.5 M737.9 110.8 L735.4 128 L745.2 134.2 M747.7 105.9 L762.5 115.7 L769.9 120.6 M629.5 152.6 L639.4 172.3 L636.9 187.1 M600 147.7 L614.8 152.6 L629.5 152.6 L644.3 147.7 L659.1 142.8 M666.5 150.2 L686.2 167.4 M614.8 152.6 L609.8 172.3 L600 177.3 M703.4 157.6 L698.5 172.3 L708.3 182.2 L728 177.3 L737.9 167.4 L732.9 147.7 M737.9 167.4 L752.6 172.3 L757.6 157.6 L752.6 140.3 M757.6 157.6 L772.3 152.6 L777.3 137.9 L769.9 123.1 M772.3 152.6 L782.2 167.4 L796.9 169.9 L805.8 162.5 M777.3 137.9 L796.9 132.9 L805.8 137.9 M782.2 118.2 L796.9 115.7 L805.8 108.3 M708.3 182.2 L705.9 199.9 M752.6 172.3 L747.7 187.1 L752.6 199.9 M782.2 167.4 L777.3 182.2 L782.2 199.9 M673.9 177.3 L681.2 189.6 L673.9 199.9 M649.2 189.6 L656.6 199.9 M28.3 200 L28.3 206.2 L6.2 206.2 M88.7 200 L88.7 224.6 L128.1 224.6 L128.1 200.0 M88.7 224.6 L88.7 238.2 L70.2 239.4 L69 245.6 L64 246.8 M6.2 236.9 L14.8 232 L32 234.5 L43.1 233.3 L64 229.6 L65.3 214.8 L56.7 217.2 M32 234.5 L33.3 246.8 L39.4 248.0 M64 229.6 L64 273.9 L59.1 271.4 L60.3 266.5 M83.7 246.8 L134.2 246.8 M83.7 246.8 L85 261.6 L87.4 270.2 L123.2 270.2 M87.4 270.2 L87.4 286.2 L91.1 287.4 L91.1 297.3 L86.2 298.5 L86.2 310.8 L78.8 318.2 L77.6 325.6 M46.8 277.6 L69 277.6 L73.9 286.2 L81.3 292.4 L85 297.3 M39.4 260.3 L43.1 271.4 L46.8 277.6 L46.8 283.7 L39.4 285 L39.4 305.9 L49.3 308.4 L53 314.5 L57.9 318.2 L59.1 325.6 L66.5 329.3 L81.3 328.1 M6.2 283.7 L39.4 285.0 M14.8 271.4 L14.8 283.7 M6.2 271.4 L14.8 271.4 L39.4 270.2 M36.9 312.1 L38.2 320.7 L20.9 318.2 L19.7 345.3 L59.1 346.6 M6.2 321.9 L20.9 320.7 M59.1 325.6 L51.7 329.3 L50.5 345.3 M59.1 346.6 L57.9 367.5 L64 370 L73.9 370.0 M19.7 345.3 L18.5 382.3 L57.9 382.3 L57.9 367.5 M18.5 370 L6.2 372.4 M6.2 353.9 L19.7 353.9 M18.5 382.3 L17.2 400.0 M81.3 317 L115.8 315.8 L117 328.1 L117 360.1 L108.4 361.3 L108.4 370 L86.2 370.0 M108.4 370 L109.6 400.0 M136.7 224.6 L135.5 244.3 M135.5 281.3 L136.7 303.4 L134.2 305.9 L133 337.9 L133 400.0 M123.2 281.3 L135.5 288.7 M150.2 259.1 L150.2 281.3 L144.1 282.5 L144.1 288.7 L136.7 289.9 M150.2 259.1 L170 257.9 L187.2 258.6 L188.4 239.4 M187.2 258.6 L189.7 276.4 L200 276.4 M150.2 276.4 L170 277.6 L189.7 276.4 M136.7 303.4 L155.2 303.4 L155.2 312.1 L200 310.8 M187.2 276.4 L187.2 310.8 M117 328.1 L133 329.3 M133 342.9 L170 342.9 L171.2 310.8 M155.2 342.9 L157.6 357.6 L172.4 357.6 L183.5 352.7 M170 334.2 L200 336.7 M157.6 357.6 L156.4 372.4 L152.7 382.3 L142.9 383.5 L134.2 389.7 M152.7 382.3 L172.4 387.2 L182.3 379.8 M142.9 383.5 L144.1 400.0 M192.1 379.8 L193.3 400.0 M225.9 200 L225.9 236.9 M256.7 200 L256.7 236.9 M256.7 216 L264 212.3 L267.7 203.7 L283.7 200.0 M287.4 200 L287.4 236.9 M315.8 200 L315.8 236.9 M312.1 200 L315.8 209.9 M345.3 200 L346.6 236.9 M345.3 214.8 L347.8 207.4 M373.6 200 L373.6 236.9 M214.8 239.4 L214.8 250.5 L218.5 251.7 L218.5 273.9 M233.3 239.4 L233.3 251.7 L238.2 249.3 L239.4 239.4 M253 239.4 L254.2 250.5 L259.1 251.7 L260.3 259.1 L288.7 259.1 M233.3 251.7 L233.3 272.7 L222.2 273.4 L222.2 319.5 L253 320.7 L253 293.6 L256.7 283.7 L259.1 273.9 L233.3 272.7 M200 277.6 L207.4 277.6 L218.5 280 L222.2 281.3 M288.7 239.4 L288.7 259.1 L289.9 285 L302.2 285.0 M260.3 259.1 L260.3 273.9 M259.1 273.9 L259.1 281.3 L273.9 281.3 L275.1 285 L289.9 285.0 M222.2 293.6 L253 293.6 M275.1 285 L275.1 319.5 L261.6 319.5 L261.6 355.2 L281.3 355.2 L285 350.2 L294.8 350.2 M253 320.7 L261.6 319.5 M275.1 319.5 L298.5 319.5 M200 310.8 L202.5 312.1 L202.5 337.9 L200 339.2 M202.5 312.1 L222.2 312.1 M229.6 320.7 L229.6 344.1 L225.9 345.3 L225.9 352.7 L200 352.7 M225.9 352.7 L238.2 351.5 L238.2 367.5 L233.3 367.5 L233.3 400.0 M244.3 345.3 L261.6 345.3 M238.2 351.5 L244.3 345.3 M238.2 367.5 L264 366.3 L264 370 L273.9 370 L278.8 362.6 L277.6 357.6 L285 355.2 M264 370 L264 389.7 L292.4 389.7 M233.3 389.7 L207.4 390.9 L206.2 377.3 L214.8 371.2 L224.6 370 L233.3 367.5 M200 374.9 L206.2 377.3 M307.1 246.8 L315.8 248 L323.2 256.7 L328.1 260.3 L337.9 259.1 L352.7 253 L370 249.3 L382.3 248.0 M352.7 264 L357.6 270.2 L352.7 273.9 L349 276.4 M303.4 276.4 L349 276.4 L349 298.5 L382.3 299.8 L382.3 248.0 M382.3 299.8 L400 299.8 M302.2 298.5 L320.7 298.5 L349 298.5 M341.6 299.8 L341.6 328.1 L318.2 334.2 L318.2 323.2 L301 322.7 M341.6 328.1 L377.3 326.8 L382.3 333 L389.7 340.4 L400 341.6 M341.6 334.2 L349 339.2 L349 355.2 L357.6 355.2 L357.6 362.6 L342.9 362.6 L337.9 370 L319.5 368.7 L318.2 334.2 M294.8 368.7 L319.5 368.7 M326.8 370 L326.8 400.0 M357.6 362.6 L370 370 L372.4 367.5 L382.3 357.6 L387.2 352.7 L400 347.8 M370 370 L365 377.3 L377.3 387.2 L387.2 394.6 L389.7 400.0 M414.8 200 L417.2 209.9 L424.6 207.4 L432 214.8 L436.9 227.1 L438.2 236.9 M439.4 214.8 L446.8 207.4 L461.6 208.6 L471.4 214.8 L472.7 236.9 M400 217.2 L414.8 214.8 M471.4 214.8 L483.7 222.2 L498.5 214.8 L501 200.0 M498.5 214.8 L508.4 224.6 L505.9 236.9 M523.2 200 L515.8 214.8 L508.4 224.6 M537.9 200 L545.3 214.8 L560.1 217.2 L560.1 229.6 L547.8 236.9 M560.1 217.2 L577.3 209.9 L587.2 214.8 M436.9 239.4 L436.9 256.7 L439.4 261.6 L436.9 273.9 L439.4 278.8 L422.2 278.8 L420.9 299.8 L400 298.5 M400 277.6 L422.2 278.8 M439.4 261.6 L453 264 L453 278.8 L459.1 285 L466.5 281.3 L476.4 273.9 L483.7 271.4 L496.1 264.0 M453 278.8 L439.4 278.8 M459.1 285 L456.7 308.4 L439.4 315.8 L429.6 303.4 L420.9 299.8 M456.7 308.4 L475.1 308.4 L483.7 293.6 L498.5 286.2 M475.1 308.4 L476.4 318.2 L483.7 328.1 L499.8 329.3 L507.1 328.1 M439.4 315.8 L436.9 330.5 L449.3 333 L459.1 342.9 L471.4 333 L483.7 328.1 M429.6 303.4 L424.6 308.4 L412.3 323.2 L414.8 337.9 L404.9 340.4 L400 337.9 M414.8 337.9 L424.6 347.8 L436.9 330.5 M424.6 347.8 L427.1 357.6 L419.7 362.6 M459.1 342.9 L461.6 357.6 L454.2 362.6 M471.4 333 L491.1 342.9 L493.6 337.9 L499.8 329.3 M491.1 342.9 L491.1 357.6 L493.6 372.4 L510.8 372.4 M469 370 L470.2 382.3 L456.7 387.2 L454.2 400.0 M470.2 382.3 L488.7 382.3 L489.9 400.0 M488.7 372.4 L488.7 382.3 M414.8 370 L414.8 379.8 L432 382.3 L432 400.0 M518.2 239.4 L518.2 254.2 L523.2 255.4 L528.1 260.3 L524.4 264 L535.5 266.5 L534.2 249.3 L536.7 240.6 M550.2 239.4 L549 256.7 L545.3 264 L542.9 269.0 M565 240.6 L565 273.9 L577.3 273.9 L600 276.4 M514.5 273.9 L530.5 275.1 L537.9 276.4 L545.3 281.3 L562.6 282.5 L565 273.9 M530.5 275.1 L529.3 288.7 L542.9 291.1 M562.6 282.5 L563.8 298.5 L577.3 298.5 L577.3 273.9 M542.9 291.1 L563.8 292.4 M504.7 298.5 L523.2 301 L537.9 305.9 L545.3 315.8 M508.4 319.5 L537.9 318.2 L545.3 315.8 L557.6 320.7 L572.4 318.2 L582.3 323.2 M523.2 301 L523.2 318.2 M537.9 318.2 L535.5 337.9 L547.8 347.8 L557.6 345.3 L557.6 320.7 M512.1 345.3 L535.5 345.3 M535.5 337.9 L534.2 357.6 L544.1 362.6 L545.3 379.8 L535.5 384.7 L518.2 384.7 M544.1 362.6 L557.6 367.5 L570 362.6 L572.4 350.2 M545.3 379.8 L557.6 382.3 L560.1 400.0 M577.3 298.5 L587.2 303.4 L600 298.5 M572.4 318.2 L574.9 333.0 M587.2 362.6 L582.3 377.3 L587.2 392.1 L600 394.6 M570 362.6 L582.3 377.3 M624.6 200 L632 214.8 L644.3 222.2 L659.1 219.7 L661.5 204.9 M644.3 222.2 L646.8 236.9 M661.5 204.9 L681.2 209.8 L686.2 224.6 L678.8 236.9 M681.2 209.8 L698.5 200.0 M713.2 200 L715.7 222.2 M686.2 224.6 L703.4 229.5 M742.8 219.7 L745.2 200.0 M782.2 200 L777.3 212.3 L782.2 222.2 M600 256.6 L612.3 261.5 L622.2 256.6 L627.1 241.9 L639.4 239.4 M622.2 256.6 L632 266.5 L641.9 261.5 L649.2 249.2 L644.3 239.4 M632 266.5 L629.5 281.2 L639.4 291.1 L636.9 298.5 M641.9 261.5 L656.6 266.5 L661.5 259.1 M656.6 266.5 L654.2 281.2 L664 286.2 L673.9 276.3 M654.2 281.2 L639.4 291.1 M639.4 291.1 L649.2 303.4 L659.1 308.3 L664 298.5 L664 286.2 M659.1 308.3 L656.6 323.1 L668.9 328 L678.8 318.2 L676.3 308.3 L664 298.5 M678.8 318.2 L693.5 320.6 L698.5 310.8 L703.4 303.4 M676.3 308.3 L686.2 298.5 L683.7 286.2 M622.2 323.1 L627.1 332.9 L644.3 337.9 L656.6 323.1 M600 315.7 L614.8 318.2 L622.2 323.1 L619.7 337.9 L609.8 345.2 L600 342.8 M644.3 337.9 L649.2 347.7 L664 352.6 L668.9 340.3 L668.9 328.0 M627.1 332.9 L624.6 347.7 L636.9 357.6 L649.2 347.7 M664 352.6 L666.5 362.5 L681.2 367.4 M668.9 340.3 L688.6 337.9 L703.4 328 L708.3 318.2 M688.6 337.9 L693.5 352.6 L686.2 362.5 M693.5 352.6 L713.2 350.2 L723.1 337.9 L718.2 328.0 M713.2 350.2 L715.7 369.9 M636.9 357.6 L634.5 372.3 L646.8 377.3 L649.2 387.1 L644.3 399.9 M646.8 377.3 L666.5 374.8 L668.9 367.4 M666.5 374.8 L671.4 387.1 L686.2 389.6 L698.5 382.2 L698.5 372.3 M686.2 389.6 L683.7 399.9 M698.5 382.2 L715.7 387.1 L728 382.2 L732.9 372.3 M715.7 387.1 L718.2 399.9 M609.8 345.2 L614.8 357.6 L607.4 372.3 L614.8 387.1 L609.8 399.9 M614.8 357.6 L624.6 347.7 M728 382.2 L742.8 392 L747.7 399.9 M691.1 234.5 L693.5 249.2 L698.5 268.9 L693.5 283.7 M715.7 232 L723.1 244.3 L725.6 256.6 M698.5 268.9 L710.8 264 L725.6 256.6 M728 264 L732.9 273.9 L737.9 283.7 L725.6 291.1 L708.3 303.4 M737.9 283.7 L752.6 273.9 L767.4 281.2 M745.2 222.2 L745.2 249.2 M737.9 283.7 L742.8 303.4 L737.9 315.7 L723.1 318.2 L718.2 328.0 M742.8 303.4 L757.6 298.5 L772.3 303.4 L782.2 293.5 L777.3 283.7 M737.9 315.7 L747.7 328 L750.2 342.8 L745.2 352.6 M747.7 328 L767.4 330.5 L772.3 342.8 L787.1 345.2 L796.9 337.9 M772.3 303.4 L777.3 315.7 L767.4 330.5 M782.2 293.5 L796.9 298.5 L805.8 293.5 M777.3 315.7 L794.5 318.2 L805.8 323.1 M782.2 249.2 L787.1 236.9 L796.9 232 L805.8 234.5 M760 222.2 L762.5 236.9 M767.4 249.2 L782.2 249.2 L787.1 264 L805.8 268.9 M57.9 400 L57.9 414.8 M98.5 407.4 L115.8 407.4 L115.8 422.2 L133 423.4 M98.5 407.4 L98.5 414.8 L94.8 416 L94.8 445.6 L112.1 446.8 L115.8 436.9 L110.8 429.6 L115.8 422.2 M133 407.4 L133 414.8 L147.8 416 L162.6 424.6 M133 423.4 L134.2 439.4 L147.8 446.8 L160.1 441.9 M56.7 417.2 L49.3 429.6 L45.6 444.3 L48 453 L66.5 453 L67.7 424.6 L73.9 416.0 M6.2 436.9 L19.7 444.3 L24.6 459.1 M56.7 457.9 L55.4 471.4 L51.7 485 L53 508.4 L44.3 513.3 L46.8 523.2 L53 528.1 M94.8 445.6 L94.8 457.9 L56.7 457.9 M112.1 446.8 L120.7 459.1 L147.8 461.6 L147.8 473.9 M120.7 459.1 L115.8 473.9 L112.1 483.7 L112.1 498.5 L112.1 533 L118.2 534.2 L118.2 562.6 M112.1 498.5 L147.8 499.8 L192.1 501.0 M96.1 496.1 L105.9 489.9 L112.1 483.7 M6.2 473.9 L24.6 473.9 L34.5 478.8 L36.9 471.4 L51.7 469.0 M24.6 488.7 L34.5 478.8 M24.6 488.7 L27.1 508.4 L39.4 515.8 M6.2 510.8 L17.2 512.1 L17.2 547.8 L24.6 557.6 L32 557.6 M73.9 515.8 L83.7 515.8 L103.4 520.7 L112.1 523.2 M69 530.5 L73.9 537.9 L81.3 539.2 L80 561.3 L71.4 560.1 M81.3 540.4 L118.2 540.4 M80 561.3 L87.4 567.5 L87.4 593.3 M118.2 562.6 L147.8 562.6 M112.1 533 L147.8 531.8 L167.5 528.1 L184.7 525.6 M147.8 531.8 L147.8 562.6 L147.8 593.3 M125.6 563.8 L125.6 593.3 M167.5 528.1 L167.5 557.6 L179.8 557.6 L179.8 593.3 M162.6 560.1 L162.6 577.3 L172.4 584.7 M184.7 525.6 L186 542.9 L200 545.3 M186 424.6 L187.2 451.7 L182.3 454.2 L183.5 471.4 M186 424.6 L200 423.4 M160.1 441.9 L182.3 454.2 M184.7 486.2 L192.1 501 L192.1 510.8 M6.2 562.6 L17.2 570 L29.6 562.6 L34.5 552.7 M34.5 570 L39.4 582.3 L32 594.6 M216 400 L216 523.2 M200 422.2 L216 422.2 L238.2 422.2 L254.2 422.7 L287.4 422.2 M254.2 400 L254.2 422.7 M224.6 400 L224.6 406.2 L216 406.2 M246.8 422.2 L246.8 453 L216 453.0 M246.8 453 L285 453.0 M200 485 L216 485 L246.8 485 L281.3 485.0 M246.8 485 L246.8 520.7 M200 524.4 L209.9 523.2 L246.8 520.7 L278.8 515.8 M209.9 523.2 L209.9 555.2 L200 555.2 M244.3 521.9 L244.3 555.2 L209.9 555.2 M244.3 555.2 L281.3 555.2 M206.2 555.2 L206.2 563.8 L214.8 563.8 M229.6 555.2 L229.6 600.0 M251.7 555.2 L251.7 600.0 M328.1 400 L328.1 414.8 L347.8 414.8 L357.6 414.8 L357.6 428.3 L365 429.6 L365 402.5 M328.1 414.8 L308.4 411.1 L301 417.2 L302.2 429.6 L308.4 440.6 L308.4 449.3 L318.2 453 L328.1 457.9 M325.6 422.2 L328.1 436.9 L333 449.3 L328.1 457.9 M357.6 428.3 L350.2 432 L350.2 461.6 L334.2 461.6 L328.1 457.9 M387.2 430.8 L387.2 446.8 L400 449.3 M365 429.6 L387.2 430.8 M328.1 457.9 L315.8 464 L312.1 471.4 L318.2 478.8 L313.3 486.2 L313.3 496.1 L307.1 501 L308.4 507.1 M285 477.6 L315.8 477.6 M350.2 461.6 L357.6 464 L357.6 478.8 L350.2 481.3 L350.2 493.6 L341.6 493.6 L340.4 508.4 L308.4 507.1 M340.4 508.4 L342.9 520.7 L350.2 520.7 L350.2 530.5 L346.6 533 L347.8 547.8 L344.1 552.7 M350.2 520.7 L400 520.7 M355.2 481.3 L367.5 491.1 L376.1 501 L400 501.0 M383.5 461.6 L400 461.6 M383.5 461.6 L377.3 454.2 L387.2 446.8 M308.4 507.1 L302.2 520.7 L308.4 533 L281.3 533.0 M308.4 533 L313.3 542.9 L320.7 550.2 L320.7 562.6 L315.8 572.4 L318.2 582.3 L291.1 583.5 L291.1 600.0 M320.7 562.6 L330.5 567.5 L337.9 557.6 L344.1 552.7 M318.2 582.3 L320.7 600.0 M330.5 567.5 L325.6 577.3 M344.1 572.4 L344.1 587.2 L372.4 572.4 L400 570.0 M344.1 572.4 L357.6 570 L372.4 557.6 L377.3 542.9 L387.2 530.5 L394.6 520.7 M400 411.1 L409.9 409.9 L429.6 408.6 L462.8 407.4 L493.6 406.2 L520.7 404.9 M462.8 407.4 L462.8 436.9 L471.4 438.2 L471.4 464 L464 466.5 M493.6 406.2 L493.6 439.4 L486.2 441.9 L486.2 453 L478.8 454.2 L478.8 461.6 M432 436.9 L462.8 436.9 M432 436.9 L432 466.5 L439.4 469.0 M493.6 439.4 L513.3 439.4 L525.6 436.9 M478.8 454.2 L505.9 461.6 L505.9 483.7 L473.9 483.7 L471.4 478.8 L464 473.9 L464 501 L471.4 502.2 L471.4 508.4 L478.8 509.6 L478.8 517 L488.7 515.8 L493.6 505.9 L505.9 503.4 L505.9 483.7 M400 466.5 L407.4 471.4 L417.2 470.2 L427.1 472.7 L432 469 L439.4 464 L449.3 461.6 L456.7 466.5 L464 466.5 M505.9 467.7 L513.3 467.7 L513.3 464 L537.9 462.8 M505.9 492.4 L518.2 492.4 L525.6 498.5 L530.5 498.5 M434.5 501 L434.5 508.4 L429.6 509.6 L429.6 537.9 L427.1 547.8 L412.3 547.8 L411.1 557.6 L400 557.6 M434.5 501 L440.6 501 L440.6 508.4 L450.5 509.6 L450.5 540.4 L443.1 541.6 L441.9 552.7 L436.9 547.8 L427.1 547.8 M464 501 L450.5 509.6 M488.7 515.8 L485 528.1 L483.7 537.9 L480 539.2 M450.5 540.4 L480 539.2 L505.9 537.9 L508.4 534.2 L523.2 530.5 L525.6 528.1 M480 539.2 L480 577.3 L449.3 577.3 L449.3 593.3 M505.9 537.9 L507.1 567.5 L501 570 L501 577.3 L480 577.3 M507.1 567.5 L530.5 567.5 M501 577.3 L501 593.3 M412.3 557.6 L412.3 570 L406.2 571.2 L406.2 577.3 L411.1 577.3 L411.1 593.3 M449.3 557.6 L449.3 577.3 M547.8 400 L547.8 427.1 L560.1 428.3 L565 429.6 M526.8 429.6 L547.8 427.1 M572.4 400 L573.6 417.2 L582.3 417.2 L600 414.8 M573.6 417.2 L572.4 424.6 L577.3 432 L584.7 434.5 L600 436.9 M565 429.6 L563.8 459.1 L550.2 461.6 L547.8 481.3 M563.8 459.1 L577.3 456.7 L582.3 466.5 L582.3 481.3 L600 483.7 M572.4 481.3 L572.4 493.6 L582.3 493.6 M562.6 483.7 L563.8 510.8 L545.3 512.1 L537.9 508.4 M563.8 510.8 L567.5 513.3 L567.5 534.2 L589.7 534.2 L590.9 515.8 L582.3 513.3 L582.3 493.6 M544.1 512.1 L544.1 530.5 L540.4 534.2 L542.9 540.4 L551.5 540.4 L551.5 553.9 L534.2 553.9 M551.5 540.4 L579.8 540.4 L578.6 552.7 L570 557.6 L563.8 557.6 L563.8 572.4 L542.9 572.4 L542.9 582.3 L537.9 584.7 M563.8 557.6 L551.5 553.9 M579.8 540.4 L600 542.9 M563.8 572.4 L572.4 572.4 L572.4 587.2 L577.3 582.3 L584.7 572.4 L600 562.6 M542.9 582.3 L542.9 593.3 M600 429.5 L619.7 429.5 L627.1 422.2 L624.6 409.8 L632 407.4 M619.7 429.5 L624.6 441.9 L614.8 456.6 L600 461.5 M624.6 441.9 L644.3 444.3 L649.2 434.5 L639.4 427.1 M644.3 444.3 L646.8 461.5 L641.9 471.4 L641.9 518.2 M624.6 464 L624.6 478.8 L609.8 488.6 L600 486.2 M624.6 478.8 L641.9 478.8 M609.8 488.6 L614.8 500.9 L641.9 502.2 M614.8 500.9 L617.2 518.2 L609.8 528 L612.3 537.9 L600 537.9 M617.2 518.2 L641.9 518.2 L651.7 520.6 L661.5 518.2 M627.1 523.1 L628.3 537.9 L636.9 539.1 L639.4 552.6 L612.3 553.9 M612.3 537.9 L612.3 564.9 L600 564.9 M612.3 564.9 L649.2 564.9 L648 599.4 M649.2 427.1 L656.6 424.6 L673.9 417.2 L681.2 414.8 M656.6 424.6 L664 444.3 L673.9 461.5 L686.2 491.1 M649.2 434.5 L664 444.3 M646.8 461.5 L659.1 481.2 L668.9 508.3 L673.9 515.7 L686.2 525.6 M659.1 481.2 L668.9 471.4 L673.9 461.5 M686.2 491.1 L671.4 513.2 M686.2 491.1 L696 487.4 L705.9 478.8 L708.3 466.5 M688.6 432 L691.1 441.9 L703.4 444.3 L710.8 456.6 L718.2 459.1 M688.6 432 L703.4 436.9 L723.1 432 L720.6 409.8 L713.2 400.0 M723.1 432 L730.5 434.5 L728 439.4 L718.2 454.2 L708.3 466.5 L728 471.4 M740.3 400 L737.9 414.8 L740.3 432 L750.2 432.0 M750.2 432 L755.1 424.6 L777.3 422.2 L782.2 417.2 M750.2 432 L755.1 446.8 L762.5 451.7 L772.3 446.8 L777.3 422.2 M762.5 451.7 L752.6 459.1 L745.2 471.4 M772.3 446.8 L787.1 451.7 L796.9 459.1 L805.8 461.5 M705.9 478.8 L713.2 476.3 L718.2 505.9 L725.6 508.3 M728 473.9 L725.6 508.3 L713.2 510.8 L698.5 523.1 L686.2 525.6 M725.6 508.3 L742.8 513.2 L755.1 520.6 L772.3 530.5 L787.1 547.7 M742.8 476.3 L747.7 493.5 L745.2 510.8 M760 481.2 L762.5 496 L777.3 498.5 L782.2 505.9 L792 508.3 M777.3 498.5 L779.7 488.6 M755.1 520.6 L750.2 532.9 L752.6 557.6 M698.5 523.1 L698.5 534.2 L721.9 534.2 L723.1 518.2 L728 516.9 M661.5 518.2 L664 532.9 L673.9 535.4 L686.2 532.9 L686.2 525.6 M686.2 532.9 L676.3 552.6 L659.1 552.6 L656.6 560 L649.2 564.9 M676.3 552.6 L683.7 560 L713.2 561.3 L714.5 534.2 M683.7 560 L683.7 577.3 L673.9 579.7 L673.9 599.9 M683.7 577.3 L708.3 577.3 L715.7 594.5 L718.2 599.9 M714.5 552.6 L732.9 557.6 L742.8 547.7 L728 537.9 L721.9 534.2 M732.9 557.6 L740.3 572.3 L752.6 574.8 L757.6 560 L752.6 557.6 M740.3 572.3 L742.8 587.1 L752.6 594.5 M757.6 560 L772.3 567.4 L787.1 569.9 M772.3 567.4 L777.3 579.7 L787.1 587.1 M639.4 552.6 L659.1 552.6 M31 594.4 L33.3 607.7 L35.5 621 L33.3 634.3 L37.7 643.2 L46.6 654.3 L55.4 663.2 M6.7 607.7 L31 606.6 M46.6 603.3 L53.2 607.7 L51 614.4 L44.3 612.2 M77.6 594.4 L73.2 607.7 L66.5 623.3 L59.9 634.3 L46.6 641 L37.7 643.2 M102 594.4 L103.1 616.6 L97.6 625.5 L93.1 634.3 L88.7 643.2 M73.2 618.8 L103.1 618.8 M97.6 625.5 L124.2 625.5 M124.2 594.4 L124.2 625.5 L124.2 641.0 M146.3 594.4 L147.5 621 L147.5 641.0 M147.5 621 L177.4 623.3 M147.5 656.5 L146.3 674.3 L141.9 678.7 L137.5 674.3 M6.7 654.3 L20 647.6 L33.3 652.1 L44.3 652.1 L55.4 663.2 L55.4 676.5 L39.9 672 L28.8 674.3 L20 678.7 L6.7 672.0 M55.4 676.5 L73.2 678.7 L84.3 676.5 L95.3 676.5 L99.8 689.8 L115.3 692 L117.5 678.7 M73.2 678.7 L71 687.6 L77.6 696.4 M20 678.7 L17.7 692 L22.2 698.6 M95.3 676.5 L93.1 663.2 L88.7 654.3 L73.2 654.3 L64.3 647.6 M99.8 689.8 L97.6 705.3 L106.4 707.5 L119.7 723 L133 740.8 M97.6 705.3 L84.3 714.2 L73.2 725.3 M115.3 692 L133 692 L141.9 700.9 M157.4 665.4 L158.5 683.1 L168.5 689.8 L172.9 694.2 M135.3 674.3 L144.1 658.7 L157.4 665.4 L177.4 666.5 M159.6 692 L161.9 705.3 L155.2 714.2 M215.1 590 L215.1 624.3 L199.1 625.4 L199.1 638 L190 639.1 M215.1 602.6 L248.3 602.6 L248.3 644.8 M252.8 590 L252.8 594.6 L283.7 594.6 M231.1 590 L231.1 601.4 M248.3 618.6 L284.8 618.6 M215.1 624.3 L248.3 624.3 M317.9 590 L316.8 601.4 L313.4 615.1 L314.5 622.0 M372.8 595.7 L365.9 606 L367.1 619.7 L370.5 631.1 M584.2 590 L584.2 620.8 M606.1 590 L606.1 621.9 M631.4 590 L631.4 623.0 M656.7 590 L654.5 601 L657.8 607.6 L651.2 614.2 L652.3 620.8 L661.1 625.1 M657.8 607.6 L663.3 603.2 L678.6 601 L685.2 605.4 M685.2 590 L686.3 605.4 L678.6 609.8 L676.4 618.6 L683 625.1 L691.8 627.3 M686.3 605.4 L696.2 607.6 L700.6 616.4 L717.1 618.6 L717.1 628.4 M723.7 590 L724.8 609.8 L742.3 612.0 M729.2 594.4 L729.2 609.8 M767.6 590 L768.7 607.6 M588.6 624.1 L586.4 633.9 L582 638.3 M612.7 626.2 L613.8 637.2 M641.3 628.4 L632.5 636.1 M666.5 631.7 L667.6 642.7 M674.2 647.1 L683 643.8 L689.6 647.1 M706.1 632.8 L711.6 644.9 L707.2 653.7 M727 632.8 L727 670.2 L757.7 670.2 L757.7 653.7 M702.8 662.5 L703.9 691.1 L694 693.3 M727 670.2 L718.2 677.9 L722.6 686.7 L733.6 688.9 L742.3 680.1 L748.9 671.3 M757.7 670.2 L777.5 666.9 M788.5 632.8 L766.5 651.5 M757.2 690 L757.2 709.2 L755 716.6 L756.5 728.4 L755 732.9 L746.2 734.3 M757.2 709.2 L766.8 701.8 L777.2 698.9 L784.6 695.9 M756.5 728.4 L763.9 726.9 L772.8 726.2 L777.2 732.9 L781.6 738.8 M796.4 716.6 L805.3 717.3 M796.4 704.8 L796.4 728.4 L800.8 735.8 L805.3 737.3 M796.4 755 L799.4 763.9 L805.3 769.8 M786.8 760.9 L786.8 775.7 L764.6 776.4 L763.9 792.0" fill="none" stroke="#616565" stroke-width="0.9"/>
<path d="M299.3 59.1 L303.4 56.2 L309.6 56.2 L314.5 58.4 L315.8 66.5 L319.5 71.4 L323.2 71.4 L322.4 73.9 L318.2 75.1 L318.7 81.3 L321.9 86.2 L324.4 92.4 L323.2 96.1 L319.5 89.9 L314.5 82.5 L315.3 75.1 L312.1 69 L309.6 62.8 L305.9 59.1 L302.2 62.8Z M368.2 261.1 L373.6 257.9 L379.8 261.6 L387.2 265.3 L393.3 270.2 L396.6 276.4 L394.6 276.8 L389.7 272.7 L383.5 267.7 L377.3 265.3 L372.4 263.5Z M604.9 307.1 L608.6 304.6 L612.3 299.7 L614.8 294.8 L612.3 287.4 L614.8 284.9 L616 289.9 L619.7 286.2 L622.2 286.2 L620.9 292.3 L627.1 293.1 L623.4 297.2 L619.7 300.9 L616 305.9 L612.3 309.6 L609.8 313.2 L606.2 313.2Z M526.1 502.2 L528.1 502.2 L529.3 507.1 L533 504.7 L534.2 508.4 L531.8 515.8 L529.3 520.7 L530.5 525.6 L534.2 526.8 L536.7 524.4 L535.5 529.3 L534.2 534.2 L533 538.4 L530.5 536.7 L528.1 533 L525.6 531.8 L528.1 528.1 L525.6 520.7 L527.6 514.5 L528.1 509.6Z M121.6 664.7 L122.9 656.9 L128.1 653 L133.2 653 L136.4 658.2 L134.5 664.7 L129.4 668.6 L124.2 667.8Z M42.1 680.3 L45.6 680.3 L48.6 683.4 L51.7 687.7 L51.1 689.6 L46.8 689.3 L44.3 685.2 L42.5 682.8Z M59.1 684 L61 686.5 L64 689.6 L64.6 695.7 L67.1 698.2 L66.5 701.9 L70.2 703.1 L75.1 703.7 L78.8 705.6 L82.5 704.9 L85 707.4 L84.3 710.5 L80 710.5 L76.3 708 L71.4 707.4 L66.5 706.2 L62.8 703.7 L61 699.4 L60.3 695.7 L57.3 692 L58.5 690.8 L61.6 693.9 L61.6 690.2 L59.7 687.7Z M144.6 696.3 L148.3 695.1 L152 696.3 L151.4 699.4 L154.5 701.9 L154.5 706.8 L150.8 710.5 L146.5 712.9 L143.4 714.2 L140.3 711.7 L140.9 708 L144.6 705.6 L147.7 703.1 L147.7 699.4 L145.2 698.8Z M539.6 600 L542.1 602.5 L543.9 607.4 L544.5 612.3 L548.2 612.9 L551.9 611.7 L554.4 607.4 L556.2 603.1 L558.1 603.7 L556.8 608.6 L555.6 611.7 L562.4 610.5 L563.6 610.5 L563.6 613.5 L558.1 613.5 L553.1 615.4 L550.1 618.5 L547 620.3 L543.9 618.5 L541.4 614.8 L540.8 607.4 L539 602.5Z M784.9 729.3 L787.5 731.9 L791.4 739.6 L795.2 746.1 L796.5 752.6 L792.7 755.2 L788.8 751.3 L785.7 743.5 L784.1 735.8Z M770.7 790.8 L774.6 789.3 L778.4 790.8 L777.9 793.9 L772 793.9Z M424.3 413.3 L425.6 415.1 L426.2 417.6 L428.7 416.3 L427.4 420 L428 425 L429.9 427.4 L431.7 428.7 L431.7 431.1 L430.5 434.2 L428.7 432.4 L427.4 428.7 L425.6 425 L424.3 420.0Z M438.5 376.9 L439.7 373.2 L442.2 370.8 L444.7 368.3 L447.1 363.4 L449 364 L451.4 365.2 L450.8 367.7 L447.7 369.5 L447.1 372 L444.7 374.5 L442.2 376.3 L439.7 377.9Z" fill="#2c4668" stroke="#27405f" stroke-width="0.6"/>
<path d="M181 6.2 L190.9 17.2 L197 32 L200 40.6 M240.6 6.2 L229.6 17.2 L227.1 32 L225.9 49.3 L223.4 57.9 L214.8 64 L200 71.4 M240.6 6.2 L249.3 17.2 L257.9 28.3 L262.8 39.4 L264 49.3 L269 56.7 L281.3 60.3 L291.1 59.1 L298.5 54.2 L308.4 53 L318.2 57.9 L328.1 64.5 L340.4 73.9 L352.7 83.7 L362.6 91.1 L372.4 101 L382.3 108.4 L394.6 118.2 L400 120.7 M218.5 194.6 L227.1 188.4 L244.3 182.3 L261.6 176.1 L281.3 170 L298.5 164.5 L308.4 161.3 L323.2 160.1 L337.9 157.6 L347.8 151.5 L360.1 147.8 L372.4 145.3 L382.3 142.9 L392.1 140.4 L400 136.7 M200.5 60 L200.5 91 L196.6 100.5 L188.8 110.9 L187.9 123.8 L184.5 132.4 L181 141 L175.9 145.3 L175.3 156.6 L169 165.2 L160.3 180.7 L153.4 191 L149.1 200.0 M422.2 91.1 L427.1 78.8 L433.3 61.6 L449.3 55.4 L464 46.8 L470.2 34.5 L472.7 19.7 L471.4 11.1 L473.9 6.2 M422.2 91.1 L416 101 L409.9 110.8 L411.1 123.2 L404.9 134.2 M404.9 134.2 L419.7 133 L436.9 131.8 L449.3 131.8 L464 136.7 L481.3 140.4 L498.5 136.7 L513.3 136.7 L523.2 141.6 L533 147.8 L545.3 155.2 L552.7 158.9 L567.5 157.6 L579.8 160.1 L594.6 159.6 L600 157.6 M404.9 134.2 L414.8 145.3 L427.1 157.6 L436.9 172.4 L445.6 184.7 L456.7 194.6 L460.3 200.0 M588.4 6.2 L587.2 19.7 L590.9 32 L597 39.4 L600 41.9 M600 157.6 L594.6 162.6 L584.7 172.4 L574.9 184.7 L567.5 194.6 L563.8 200.0 M805.8 72.6 L796.9 75.1 L787.1 78.8 L772.3 82.5 L760 87.4 L747.7 94.8 L732.9 103.4 L718.2 112 L703.4 118.2 L691.1 125.6 L673.9 132.9 L659.1 142.8 L644.3 148.9 L632 150.2 L619.7 147.7 L614.8 150.2 L600 157.6 M659.1 142.8 L666.5 150.2 L671.4 157.6 L673.9 167.4 L683.7 172.3 L686.2 183.4 L693.5 188.3 L703.4 189.6 L715.7 188.3 L728 185.9 L737.9 183.4 L752.6 182.2 L767.4 177.3 L782.2 174.8 L796.9 173.6 L805.8 175.3 M715.7 188.3 L718.2 194.5 L720.6 199.9 M600 41.9 L603.7 46.8 L604.9 56.6 L602.5 66.5 L600 71.4 M600 84.9 L603.7 92.3 L604.9 97.2 L600 100.9 M600 128 L607.4 137.9 L612.3 147.7 L614.8 150.2 M6.2 257.1 L24.6 256.2 L36.9 255.4 L54.2 253 L69 248 L83.7 244.3 L98.5 239.4 L110.8 234.5 L123.2 229.6 L135.5 224.6 L150.2 223.4 L160.1 224.6 M160.1 224.6 L163.8 221.7 L172.4 222.2 L175.4 225.9 L173.6 230.8 L165 231.5 L161.3 229.6 L160.1 224.6 M150.2 223.4 L147.8 214.8 L145.3 206.2 L147.8 201.2 L152.7 200.0 M175.4 225.9 L182.3 219.7 L189.7 216 L200 209.9 M165 231.5 L167.5 244.3 L168.7 259.1 L170 273.9 L172.4 288.7 L172.4 303.4 L173.6 318.2 L176.1 333 L178.6 347.8 L182.3 362.6 L183.5 377.3 L182.3 389.7 L178.6 400.0 M397 238.2 L396.6 249.3 L394.6 259.1 L395.8 273.9 L397 288.7 L395.8 303.4 L398.3 318.2 L399 337.9 L400 347.8 M422.7 356.2 L422.2 350.2 L436.9 340.4 L451.7 330.5 L461.6 318.2 L471.4 303.4 L481.3 288.7 L488.7 273.9 L496.1 259.1 L498.5 249.3 L503.4 240.6 L508.4 236.9 L523.2 229.6 L537.9 222.2 L550.2 213.5 L557.6 204.9 L561.3 200.0 M503.4 239.4 L493.6 234.5 L483.7 229.6 L478.8 222.2 L473.9 214.8 L466.5 204.9 L462.8 200.0 M508.4 236.9 L520.7 239.4 L525.6 245.6 L534.2 249.3 L536.7 261.6 L540.4 273.9 L544.1 286.2 L547.8 296.1 L549.3 299.8 M583.5 293.6 L579.3 300.2 M456.2 362.6 L464 363.8 L483.7 361.3 L503.4 357.6 L523.2 353.9 L539.9 352.0 M400 337.9 L400.7 347.8 L401.2 356.2 M550.3 300 L554.8 305.9 L557 314.8 L560.7 319.2 L567.3 320.7 L571 328.1 L575.5 334 L579.2 341.4 L582.1 348.8 L582.9 353.2 M581.4 300 L576.2 305.9 L573.2 314.8 L570.3 324.4 L571 328.1 M579.2 335.5 L584.3 334.3 L592.5 335.5 L593.5 341.4 L594.7 348.8 L593.9 353.2 L588.8 356.9 L584.3 360.6 L579.9 360.6 L576.2 357.6 L575.2 351.7 L575.5 344.3 L576.9 339.2 L579.2 335.5 M582.9 348.8 L587.3 342.9 L592.5 336.2 L599.1 332.5 L605 326.6 L612.3 324.2 M540 352.5 L548.9 351.7 L556.3 350.2 L563.6 348 L572.5 347.3 L575.5 348.8 L582.9 351 L590.2 352.5 L596.2 352.9 L605 353.5 M582.9 353.2 L579.9 359.1 L575.5 363.5 L569.6 367.2 L563.6 372.4 L559.2 378.3 L554.8 385.7 L552.6 394.6 L547.4 402 L543 409.4 L540 411.6 M582.9 353.2 L582.9 359.1 L587.3 363.5 L591.7 368 L596.2 373.9 L600.6 379.8 L603.5 387.2 L605.8 394.6 L609.5 402 L613.9 407.9 L619.8 413.8 L625.7 420.0 M584.3 360.6 L590.2 359.1 L591.7 365.0 M612.3 324.3 L624.6 318.2 L639.4 310.8 L651.7 303.4 L666.5 293.5 L678.8 286.2 L691.1 280 L703.4 276.3 L715.7 271.4 L725.6 257.9 L737.9 254.2 L747.7 248 L760 240.6 L772.3 234.5 L787.1 228.3 L805.8 222.6 M720.6 200 L728 207.4 L734.2 214.8 L745.2 217.2 L752.6 227.1 L758.8 239.4 L762.5 254.2 L767.4 271.4 L769.9 280.0 M737.9 254.2 L740.3 261.5 L750.2 268.9 L760 273.9 L769.9 280 L779.7 288.6 L789.6 296 L796.9 303.4 L805.8 308.3 M606.2 353.9 L609.8 355.1 L622.2 361.3 L636.9 363.7 L651.7 366.9 L668.9 368.6 L683.7 367.4 L698.5 369.9 L713.2 371.8 L730.5 372.3 L747.7 373.6 L757.6 369.9 L767.4 363.7 L777.3 357.6 L787.1 353.9 L796.9 346.5 L805.8 339.1 M6.2 460.3 L22.2 462.1 L36.9 464 L54.2 466 L73.9 469 L86.2 473.9 L98.5 475.1 L108.4 473.4 L123.2 473.9 L137.9 473.9 L145.3 477.6 L152.7 480 L167.5 480 L182.3 478.8 L200 475.1 M177.8 400 L172.4 409.9 L165 423.4 L161.3 432 L161.3 444.3 L157.6 456.7 L153.9 469 L152.7 480 L145.3 491.1 L137.9 503.4 L134.2 518.2 L131.8 533 L130 547.8 L129.3 572.4 L128.1 600.0 M145.3 477.6 L147.8 471.4 L153.9 469.0 M200 475.1 L214.8 475.9 L232 474.4 L249.3 473.9 L259.1 473.9 L271.4 470.2 L283.7 465.3 L293.6 456.7 L303.4 444.3 L313.3 434.5 L323.2 427.1 L333 414.8 L340.4 406.2 L347.8 402 L356.4 401.2 M259.1 473.9 L253 483.7 L249.3 496.1 L245.6 505.9 L236.9 515.8 L235.7 523.2 L229.6 534.2 L222.2 542.9 L216 552.7 L214.8 567.5 L212.3 582.3 L208.6 594.6 L206.2 600.0 M400 544.1 L392.1 551.5 L382.3 561.3 L372.4 570 L360.1 579.8 L347.8 588.4 L335.5 595.8 L323.2 600.0 M406.2 400 L409.9 409.9 L414.8 422.2 L422.2 434.5 L427.1 446.8 L432 459.1 L438.2 471.4 M438.2 471.4 L449.3 472.7 L461.6 470.2 L473.9 465.3 L486.2 461.6 L498.5 455.4 L508.4 449.3 L515.8 439.4 L523.2 429.6 L530.5 419.7 L540.4 412.3 L546.6 404.9 L547.8 400.0 M438.2 471.4 L434.5 483.7 L427.1 498.5 L419.7 510.8 L412.3 523.2 L404.9 535.5 L400 544.1 M608.6 400 L614.8 409.8 L627.1 420.9 L633.2 434.5 L632 449.2 L629.5 468.9 L630 488.6 L630.8 508.3 L634.5 523.1 L641.9 535.4 L648 547.7 L649.2 562.5 L652.9 577.3 L657.9 592 L659.1 599.9 M627.1 420.9 L634.5 424.6 L638.2 430.8 L633.2 436.9 M638.2 430.8 L645.5 439.4 L656.6 449.2 L671.4 456.6 L686.2 461.5 L703.4 465.2 L718.2 467.7 L732.9 468.9 L747.7 471.4 L760 473.9 L772.3 478.8 L787.1 483.7 L796.9 486.2 L805.8 493.5 M6.5 661.6 L15.5 660.8 L25.9 655.6 L38.8 650.5 L51.7 646.6 L64.7 644 L77.6 645.3 L90.6 642.7 L103.5 641.4 L116.4 640.9 L129.4 640.1 L144.9 640.9 L155.2 642.7 L165.6 647.9 L178.5 654.3 L186.3 655.6 L200 653.0 M6.5 615.5 L11.6 620.7 L12.9 631 L11.6 641.4 L9.1 651.7 L10.3 660.8 M126 600 L126.8 615.5 L126.8 631 L129.4 640.1 L133.2 647.9 L135.8 656.9 L132 668.6 L133.2 675 L144.9 680.2 L155.2 684.1 L160.4 685.4 M90.6 644 L93.1 659.5 L103.5 667.3 L113.8 671.2 L126.8 673.7 L133.2 675.0 M160.4 685.4 L168.2 675 L178.5 666 L186.3 655.6 M200 612.9 L194 623.3 L190.2 636.2 L186.3 646.6 L186.3 655.6 M156.9 684 L159.4 687.1 L161.9 684.6 M190 657.1 L197.4 653.4 L206 650.3 L214.6 647.9 L224.5 645.4 L233.1 643.5 L242.9 642.3 L254 642.9 L263.9 644.8 L273.7 644.2 L283.6 641.7 L292.2 638.6 L298.4 634.9 L303.3 631.2 L305.1 630.0 M300 632.6 L304.9 627.7 L305.5 618.5 L308.6 607.4 L314.8 603.1 L320.9 600.0 M304.9 627.7 L312.3 623.4 L319.7 624.6 L328.3 625.2 L336.9 625.9 L344.3 627.7 L349.3 630.8 L355.4 632.6 L361.6 633.2 L366.5 636.9 L371.4 638.4 L378.8 636.9 L385 635.1 L389.9 630.2 L397.3 624.6 L404.7 621.5 L413.3 619.1 L423.1 618.5 L430.5 619.1 L440 618.5 M430 619.5 L437.4 617.9 L443.5 616 L448.5 619.1 L453.4 621.5 L464.5 621.5 L470.6 617.9 L476.8 615.4 L484.2 615 L491.6 616 L499 617.2 L506.3 616.6 L515 615.4 L521.1 618.5 L528.5 621.5 L535.9 625.2 L544.5 626.5 L553.1 628.3 L560.5 632 L566.7 635.1 L570 635.1 M580.9 640 L609.3 640 L621.6 641.2 L631.4 643.7 L640 644.9 L652.4 644.3 L658.5 648 L665.9 650.5 L673.3 651.7 L678.2 652.9 L685.6 652.3 L690.5 654.2 L695.5 657.2 L700 658.5 M725.9 710 L730.8 714.9 L735.7 722.3 L740.7 730.9 L744.4 740.8 L746.8 751.9 L749.3 765.4 L753 776.5 L754.8 786.3 L754.8 791.9 M802.5 540 L802.9 551.8 L800.5 563.7 L796.6 573.5 L790.7 583.4 L786.7 591.3 L784.8 599.1 L785.2 611 L786.7 622.8 L787.7 634.6 L786.7 644.5 L784.8 654.3 M700 654.3 L707.9 660.2 L719.7 661.2 L739.4 662.2 L755.2 658.3 L767 656.3 L778.8 653.9 L784.8 654.3 M778.8 653.9 L777.9 660.2 L779.8 666.2 L786.7 668.1 L794.6 670.1 L798.6 676 L799.5 683.9 L801.5 693.8 L806.1 700.1 M784.8 642.5 L780.8 646.4 L778.8 653.9 M700 654.3 L705.9 660.2 L711.8 670.1 L715.8 681.9 L719.7 693.8 L721.7 700.1 M659 600 L662.1 610.3 L669.8 620.7 L677.6 631 L685.3 638.8 L695.7 649.1 L703.4 655.6 M722.8 699.6 L726.7 706.0 M792.7 665.9 L797.8 675 L801.7 685.3 L804.3 693.1 L806.9 698.3 M570 635.1 L575.3 636.9 L581 640.0 M382.5 108.3 L373.2 118.5 L365.9 131.4 L366.8 142.5 L373.2 153.6 L382.5 161.9 L393.6 165.6 L401 164.6 L410.2 162.8 L417.6 163.7 L428.7 159.1 L430.5 149.9 L434.2 138.8 L437 127.7 L436 116.6 L430.5 108.3 L421.3 103.7 L415.7 101.8 L406.5 100.9 L401 100.0 M405.6 134.2 L401 124 L393.6 116.6 L382.5 108.3 M405.6 134.2 L404.6 146.2 L401.9 155.4 L401 164.6 L398.2 173.9 L397.3 186.8 L396.9 199.7 L397.3 214.5 L398.2 229.3 L398.7 237.6 L398.2 245.9 M405.6 134.2 L400 136.8 M200 209.9 L209.4 203 L218.5 194.6 M600 71.4 L598.5 77.6 L600 85.0 M600 101 L594.6 105.9 L590.9 112.1 L595.8 118.2 L600 128.1 M401 356 L402.8 362.2 L402.2 368.3 L403.4 374.5 L405.3 381.2 L403.4 390.5 L405.3 399.1 L407.1 402.2 M405.3 381.2 L410.2 374.5 L413.9 365.9 L416.3 360.9 L422.5 356.0 M412.7 367.7 L425 365.2 L434.8 363.4 L447.1 362.2 L456 363.4 M405.3 381.2 L396.6 384.9 L388 386.2 M402.8 367.7 L397.9 370.8 L392.9 375.7 L388 384.3 L380.6 391.7 L374.5 396.6 L367.1 399.1 L356 401.6 M205.7 600 L203.1 606.5 L200 612.9" fill="none" stroke="#806800" stroke-width="0.9" stroke-linejoin="round"/>
<path d="M6.2 105.2 L101 105.2 M201.2 6.2 L204.9 14.8 L208.6 24.6 L202.5 32 L207.4 39.4 L211.1 49.3 L213.5 55.4 L218.5 59.1 L224.6 55.4 M304.7 6.2 L308.4 11.1 L305.9 17.2 L293.6 19.7 L281.3 23.4 L277.6 32 L282.5 41.9 L283.7 48 L278.8 53 L272.7 53 L266.5 48 L257.9 44.3 L246.8 39.4 L236.9 40.6 L229.6 48 L224.6 55.4 L231.5 61.6 M209.1 105.2 L265.3 105.2 L312.1 105.2 L312.8 97.3 L309.6 89.2 L323.2 89.9 L325.6 92.4 L400 91.1 M231 60 L232.8 63.4 L230.2 69.5 L227.6 73.8 L231.9 79.8 L228.4 82.4 L228.4 89.3 L224.1 97.1 L220.7 98.8 L217.2 92.8 L212.9 92.8 L210.3 98.8 L208.6 106.6 L204.3 107.4 L203.4 103.1 L204.3 98.8 L200.9 97.1 L197.9 100.5 L200 104 L203.1 105.7 L200.9 111.7 L201.7 116.9 L196.6 118.6 L194.5 121.2 L199.1 123.8 L200 126.4 L193.1 126.4 L188.8 127.2 L191.4 131.6 L196.6 135.9 L194 140.2 L189.7 142.8 L187.9 148.8 L187.1 152.2 L191.4 155.7 L190.5 159.1 L185.3 157.4 L182.8 160 L187.9 164.3 L184.5 166.9 L175.9 172.1 L171.6 171.2 L169 174.7 L172.4 179 L175.9 179 L174.1 183.3 L169.8 185 L168.1 188.4 L172.4 190.2 L170.7 192.8 L163.8 191 L162.1 193.6 L163.8 197.9 L158.6 196.2 L156 200.0 M100 105.2 L155.2 105.2 L156 110.9 L161.2 114.3 L160.3 121.2 L156.9 126.4 L154.3 129.8 L149.1 132.4 L145.7 137.6 L141.4 142.8 L137.9 149.3 L187.1 149.3 M400 91.1 L422.2 91.1 L461.6 93.1 L508.4 94.1 L547.8 94.8 L572.4 96.1 L600 96.1 M600 96.8 L635.7 96.8 L698.5 96 L747.7 95.5 L787.1 94.3 L805.8 98.5 M635.7 96.8 L643.1 91.6 L656.6 86.2 L673.9 83.7 L681.2 75.1 L694.8 70.2 L697.2 60.3 L707.1 55.4 L708.3 49.2 L723.1 41.9 L737.9 34.5 L747.7 27.1 L757.6 18.5 L762.5 13.5 M748.9 6.2 L753.9 11.1 L762.5 12.3 L764.9 19.7 L769.9 27.1 L777.3 36.9 L787.1 41.9 L796.9 39.4 L805.8 34.5 M787.1 94.3 L783.4 100.9 L782.2 110.8 L780.9 118.2 L774.8 116.9 L767.4 123.1 L760 137.9 L752.6 139.1 L745.2 135.4 L732.9 139.1 L723.1 150.2 L716.9 151.4 L714.5 145.2 L708.3 146.5 L698.5 155.1 L693.5 155.1 L692.3 164.9 L686.2 168.6 L678.8 167.4 L668.9 174.8 L659.1 179.7 L649.2 187.1 L636.9 187.1 L624.6 190.8 L612.3 199.9 M142.9 238.2 L200 238.2 M160.1 200 L157.6 203.7 L153.9 202.5 L155.2 209.9 L160.1 214.8 L157.6 220.9 L161.3 224.6 L153.9 227.1 L150.2 233.3 L142.9 236.9 L144.1 241.9 L147.8 243.1 L146.6 249.3 L139.2 251.7 L134.2 253 L133 248 L129.3 249.3 L130.5 255.4 L126.8 259.1 L130.5 262.8 L125.6 267.7 L123.2 273.9 L124.4 281.3 L121.9 288.7 L123.2 292.4 L115.8 293.6 L113.3 298.5 L109.6 297.3 L108.4 302.2 L103.4 303.4 L102.2 309.6 L97.3 307.1 L98.5 313.3 L94.8 315.8 L101 320.7 L98.5 325.6 L91.1 328.1 L85 329.3 L86.2 334.2 L91.1 334.2 L87.4 341.6 L91.1 345.3 L85 347.8 L81.3 350.2 L86.2 356.4 L78.8 353.9 L75.1 357.6 L80 362.6 L73.9 367.5 L78.8 372.4 L75.1 377.3 L81.3 381 L86.2 377.3 L85 383.5 L80 387.2 L83.7 394.6 L85 400.0 M200 238.2 L299.8 238.2 L299.8 237.4 L335.5 237.4 L400 238.2 M299.8 237.7 L302.2 243.1 L307.1 246.8 L305.9 264 L303.4 283.7 L301 305.9 L298.5 328.1 L296.1 352.7 L293.6 377.3 L291.6 400.0 M400 238.2 L600 238.9 M492.4 238.9 L496.1 256.7 L499.8 278.8 L503.4 298.5 L507.1 318.2 L510.8 337.9 L514.5 360.1 L517 379.8 L519.5 400.0 M588.4 238.9 L589.7 224.6 L591.6 216 L595.8 214.3 L600 216.0 M600 216.7 L606.2 214.8 L609.8 209.8 L611.1 200.0 M600 238.9 L678.8 238.2 M678.8 238.2 L691.1 233.2 L703.4 230.8 L710.8 225.8 L720.6 223.4 L730.5 220.9 L740.3 219.7 L757.6 220.9 L772.3 221.7 L792 222.6 L805.8 223.4 M678.8 238.2 L673.9 244.3 L666.5 250.5 L661.5 257.9 L660.3 264 L665.2 268.9 L673.9 273.9 L681.2 281.2 L686.2 284.2 L694.8 284.2 L697.2 291.1 L702.2 298.5 L705.9 305.9 L707.1 313.2 L713.2 320.6 L718.2 329.2 L725.6 335.4 L734.2 340.3 L741.6 346.5 L745.2 355.1 L752.6 362.5 L760 367.4 L767.4 377.3 L766.2 384.6 L771.1 390.8 L776 395.7 L779.7 398.2 M6.2 415.3 L78.8 415.3 M85 400 L78.3 404.4 L83.7 412.3 L86.2 422.2 L80 426.6 L79.3 434.5 L85 440.6 L81.3 449.3 L88.7 449.3 L91.1 453 L85 455.4 L85 464 L92.4 466.5 L94.8 473.9 L99.8 472.7 L98.5 478.8 L91.1 480 L86.2 485 L80 486.2 L78.8 492.4 L85 494.8 L91.1 491.1 L89.9 497.3 L85 499.8 L86.2 505.9 L80 509.6 L73.9 515.8 L66.5 520.7 L65.3 526.8 L71.4 528.1 L71.4 524.4 L65.3 523.2 L61.6 531.8 L60.3 537.9 L53 539.2 L55.4 545.3 L61.6 542.9 L56.7 550.2 L49.3 553.9 L48 561.3 L55.4 560.1 L53 568.7 L44.3 570 L48 578.6 L44.3 582.3 L50.5 587.2 L46.8 593.3 L44.3 594.1 L186 594.1 L187.2 597 L184.7 600.0 M291.6 400 L288.7 424.6 L285 461.6 L281.3 493.6 L279.3 513.3 L280 533 L281.3 557.6 L282.5 582.3 L283.7 600.0 M344.1 600 L345.3 594.6 L400 594.6 M519.5 400 L521.9 412.3 L524.4 424.6 L526.8 434.5 L530.5 446.8 L535.5 456.7 L539.2 465.3 L537.9 473.9 L545.3 481.3 L542.9 485 L535.5 489.9 L533 498.5 L534.2 505.9 M533 537.9 L534.2 547.8 L531.8 560.1 L529.3 572.4 L534.2 584.7 L537.9 594.6 L539.2 600.0 M400 594.6 L537.9 594.6 M777.7 400 L780.9 403.7 L788.3 408.6 L795.7 412.3 L798.2 419.7 L803.1 427.1 L804.8 436.9 M185 600 L181.1 607.8 L178.5 618.1 L179.8 628.5 L183.7 636.2 L188.9 641.4 L190.2 649.2 L192.8 655.6 L196.6 658.2 M193.9 660 L196.3 664.9 L198.8 667.4 M284.8 630 L285.1 637.4 L285.4 642.3 L285.4 648.5 L284.8 651.5 M344.3 600 L341.3 604.9 L342.5 608.6 L346.8 612.3 L349.3 616.6 L354.2 619.7 L358.5 622.8 L359.7 627.1 L359.1 631.4 L356 635.1 L356 639.4 L357.9 642.5 M548.2 620.3 L559.3 621.2 L570 621.9 M700 629.3 L719.7 630.7 L737.5 631.7 L744.4 632.3 L745.3 638.6 L747.3 647.4 L751.3 650.8 L757.2 650.8 L759.1 642.5 L760.1 632.6 L758.2 624.8 L757.6 616.9 L760.1 611.9 L765.1 609.4 L771 611 L778.8 613.3 L786.7 615.9 L792.6 617.9 L798.6 619.8 M570 621.2 L600 622.5 L625.9 624.6 L651.7 627.2 L677.6 629 L700.9 630.3 M283.7 600 L284.5 614.3 L284.7 630.3" fill="none" stroke="#000" stroke-width="0.9" stroke-linejoin="round"/>
<path d="M793.9 695.7 L795.2 703.4 L792.7 709.9 L790.1 715.1 L786.2 719 L784.9 724.1 L786.2 729.3" fill="none" stroke="#000" stroke-width="3.4"/>
<path d="M793.9 695.7 L795.2 703.4 L792.7 709.9 L790.1 715.1 L786.2 719 L784.9 724.1 L786.2 729.3" fill="none" stroke="#0a4f7a" stroke-width="1.6"/>
<path d="M249.3 678.5 L252.4 682.2 L254.2 688.3 L253.6 695.7 L251.1 703.1 L246.8 711.7 L243.1 715.4 L238.2 721.6 L233.3 725.3 L227.1 730.2 L223.4 731.4 M257.1 661.4 L261.4 660.8 L266.3 662.6 L273.7 663.2 L278.7 665.1 L285.4 665.1 M312.5 663.5 L318.1 662.3 L324.2 662.6 L330 662.3 M228.2 663 L232.5 663.9 L235.6 662.0 M241.1 664.7 L245.4 663.9 L250.3 662.0 M305.7 658.9 L307.6 661.4 L307 664.5" fill="none" stroke="#000" stroke-width="1.3" stroke-dasharray="4 2 6 2 2 3"/>
<path d="M508.6 694.2 L506.8 698.5 L506.8 703.4 L509.2 708.9 L511.7 712.6 M531.4 715.7 L533.9 719.4 L538.2 718.8 L543.1 715.7 L548 713.2 L552.9 710.8 L557.9 706.5 L560.3 704.6 M562.2 702.8 L566.5 700.9 L569.6 698.5 M580 691.1 L585 692.3 L587.4 691.7 L586.8 687.4 M789.7 575.5 L794.6 576.5 L797.6 581.4 L802.5 585.3 M786.7 594.2 L792.6 596.2 L798.6 594.2 L802.5 597.2 M791.7 607 L796.6 609 L800.5 605.1 M787.7 618.8 L794.6 619.8 L798.6 622.8 L802.5 620.8 M792.6 632.6 L798.6 634.6 L802.5 638.6 M786.7 647.4 L792.6 646.4 L798.6 648.4 L804.5 652.4 M784.8 656.3 L788.7 653.3 L792.6 647.4 L791.7 642.5" fill="none" stroke="#000" stroke-width="1.4"/>
</g></g>
<!-- rings, legend, copyright -->
<g id="rings" fill="none" stroke="#f0f0f0" stroke-width="0.9" clip-path="url(#mapclip)" shape-rendering="crispEdges">
<circle cx="407" cy="407" r="519.4"/>
<path d="M419.5 7.7A399.5 399.5 0 1 1 394.5 7.7"/>
<path d="M419.5 127.8A279.5 279.5 0 1 1 394.5 127.8"/>
<path d="M419.5 248.0A159.5 159.5 0 1 1 394.5 248.0"/>
<circle cx="407" cy="407" r="39.6" stroke="#ff0000" stroke-width="1.3"/>
</g>
<g id="rlabels" style="font-family:'Liberation Mono','DejaVu Sans Mono',monospace">
<text x="406.3" y="11" class="m rl" clip-path="url(#mapclip)">313</text>
<text x="406.3" y="131" class="m rl">219</text>
<text x="406.3" y="251" class="m rl">125</text>
<text x="406.3" y="371" class="m rl">31</text>
</g>
<g id="legend" class="lg">
<rect x="8" y="758" width="245" height="46" fill="#000"/>
<rect x="9.5" y="759.5" width="242" height="43" fill="#000" stroke="#a4a4a4" shape-rendering="crispEdges"/>
<text x="13" y="771">Symbols</text><text x="53" y="771">-CG</text><text x="78" y="771">-IC</text><text x="98.5" y="771">+CG</text><text x="123.5" y="771">+IC</text><text x="153" y="771">Strike age color codes</text>
<text x="13" y="784">Recent</text><text x="13" y="797">Old</text>
<g fill="none" stroke="#00e0e8" stroke-width="1">
<circle cx="60.5" cy="780.5" r="4"/><path d="M58 780.5H63"/><path d="M82 780.5H89"/>
<circle cx="110.5" cy="780.5" r="4"/><path d="M108 780.5H113M110.5 778V783"/><path d="M132 780.5H139M135.5 777V784"/>
</g>
<g fill="none" stroke="#f0f000" stroke-width="1">
<circle cx="60.5" cy="793.5" r="4"/><path d="M58 793.5H63"/><path d="M82 793.5H89"/>
<circle cx="110.5" cy="793.5" r="4"/><path d="M108 793.5H113M110.5 791V796"/><path d="M132 793.5H139M135.5 790V797"/>
</g>
<text x="153.5" y="784" style="fill:#f0f000">15+</text><text x="188.5" y="784" style="fill:#f0b000">30+</text><text x="223.5" y="784" style="fill:#ff9020">45+</text>
<text x="153.5" y="797" style="fill:#e87010">60+</text><text x="188.5" y="797" style="fill:#e85010">75+</text><text x="223.5" y="797" style="fill:#e83000">90+</text>
</g>
<g id="copy">
<rect x="685" y="792" width="121" height="14" fill="#000"/>
<text x="689" y="802" style="font-family:'DejaVu Sans Condensed','DejaVu Sans',sans-serif;font-size:10px;letter-spacing:0" textLength="113" lengthAdjust="spacingAndGlyphs">©2005 Astrogenic Systems</text>
</g>
<!-- right panel -->
<g id="panel" shape-rendering="crispEdges">
<rect x="812.5" y="8.5" width="319" height="319" rx="5" ry="5" fill="#000" stroke="#c8c8c8" shape-rendering="auto"/>
<rect x="812.5" y="333.5" width="319" height="113" rx="5" ry="5" fill="#000" stroke="#c8c8c8" shape-rendering="auto"/>
<rect x="812.5" y="453.5" width="319" height="349" rx="5" ry="5" fill="#000" stroke="#c8c8c8" shape-rendering="auto"/>
<rect x="819.5" y="16.5" width="57" height="17" fill="#5a0000" stroke="#c8c8c8"/>
<rect x="883.5" y="16.5" width="57" height="17" fill="#333" stroke="#c8c8c8"/>
<rect x="994.5" y="16.5" width="127" height="17" fill="#333" stroke="#c8c8c8"/>
<rect x="821.5" y="64.5" width="81" height="15" fill="#555" stroke="#d0d0d0"/>
<rect x="931.5" y="64.5" width="81" height="15" fill="#555" stroke="#d0d0d0"/>
<rect x="1041.5" y="64.5" width="81" height="15" fill="#555" stroke="#d0d0d0"/>
<rect x="821" y="217" width="303" height="1" fill="#8a8a8a"/>
<rect x="821" y="358" width="303" height="1" fill="#8a8a8a"/>
</g>
<g id="ptext">
<text x="848" y="30" class="b m" style="font-family:'Liberation Serif',serif;font-size:13px;letter-spacing:0;fill:#d0d0d0">STRIKE</text>
<text x="912" y="30" class="b m" style="font-family:'Liberation Serif',serif;font-size:13px;letter-spacing:0;fill:#c0c0c0">NOISE</text>
<text x="998.5" y="30" class="b" style="letter-spacing:0">Bng 207°</text>
<text x="1118.5" y="30" class="b e gr" style="letter-spacing:0">356mi</text>
<text x="862" y="76" class="m" style="letter-spacing:-0.25px">Strikes/min</text>
<text x="972" y="76" class="m" style="letter-spacing:-0.25px">Close/min</text>
<text x="1082" y="76" class="m" style="letter-spacing:-0.25px">Noises/min</text>
<text x="903" y="111" class="b e" style="font-size:27px">0</text>
<text x="1013" y="111" class="b e" style="font-size:27px">0</text>
<text x="1123" y="111" class="b e" style="font-size:27px;fill:#b4b4b4">0</text>
<text x="903" y="143" class="e">Total Strikes</text>
<text x="1013" y="143" class="e">Total Close</text>
<text x="1123" y="143" class="e g">Total Noises</text>
<text x="903" y="161" class="e">42</text>
<text x="1013" y="161" class="e">0</text>
<text x="1123" y="161" class="e">43</text>
<text x="821" y="215" class="g">Lightning type distribution</text>
<text x="821" y="236" class="b c">Cloud-ground</text>
<text x="913" y="236">+</text>
<text x="980" y="236" class="b">31%</text>
<text x="1015" y="236" class="b">−</text>
<text x="1082" y="236" class="b">62%</text>
<text x="821" y="261" class="b c g">Count</text>
<text x="925" y="261" class="b">13</text>
<text x="1028" y="261" class="b">26</text>
<text x="821" y="290.5" class="b c">Intracloud</text>
<text x="913" y="290.5">+</text>
<text x="980" y="290.5" class="b">2%</text>
<text x="1015" y="290.5" class="b">−</text>
<text x="1082" y="290.5" class="b">5%</text>
<text x="821" y="314.5" class="b c g">Count</text>
<text x="925" y="314.5" class="b">1</text>
<text x="1028" y="314.5" class="b">2</text>
<text x="821" y="352.5" class="b gr" style="font-size:16px;letter-spacing:0.19px">3/22/2026 10:00:18 AM</text>
<text x="821" y="388">Squelch</text><text x="909" y="388">0</text><text x="981" y="388">Upload</text><text x="1061" y="388" class="g">Disabled</text>
<text x="821" y="408">Persistence</text><text x="909" y="408">90 min</text><text x="981" y="408">Capture</text><text x="1061" y="408" class="gr">Active</text>
<text x="821" y="428">Range</text><text x="909" y="428">313 mi</text><text x="981" y="428">Receiver</text><text x="1061" y="428" class="gr">Enabled</text>
<text x="821" y="475" class="g">Uptime</text><text x="909" y="475">1653:45</text><text x="981" y="475" class="g">Peak time</text><text x="1061" y="475" class="g">Plot</text>
<text x="821" y="498" class="g">Peak rate</text><text x="909" y="498">2/min</text><text x="981" y="498">1:26 AM</text><text x="1061" y="498">Strike</text>
<text x="822" y="527.5" class="g">Trend graph</text><text x="908" y="527.5">60 min</text>
</g>
<g id="bars">
<rect x="925.5" y="227.5" width="50" height="10" rx="2" fill="#000" stroke="#8a8a8a"/>
<rect x="926" y="228" width="15" height="9" fill="#ff0000"/>
<rect x="1028.5" y="227.5" width="50" height="10" rx="2" fill="#000" stroke="#8a8a8a"/>
<rect x="1029" y="228" width="30" height="9" fill="#90d0ff"/>
<rect x="925.5" y="281.5" width="50" height="10" rx="2" fill="#000" stroke="#8a8a8a"/>
<rect x="926" y="282" width="1" height="9" fill="#e070c0"/>
<rect x="1028.5" y="281.5" width="50" height="10" rx="2" fill="#000" stroke="#8a8a8a"/>
<rect x="1029" y="282" width="2" height="9" fill="#00e000"/>
</g>
<g id="axes" class="ax" shape-rendering="crispEdges" fill="#c8c8c8">
<rect x="1088" y="542" width="1" height="236"/>
<rect x="822" y="777" width="267" height="1"/>
<rect x="1084" y="542" width="4" height="1"/>
<rect x="1086" y="581" width="5" height="1"/>
<rect x="1084" y="620" width="7" height="1"/>
<rect x="1086" y="659" width="5" height="1"/>
<rect x="1084" y="698" width="7" height="1"/>
<rect x="1086" y="738" width="5" height="1"/>
<rect x="822" y="771" width="1" height="6"/>
<rect x="866" y="775" width="1" height="2"/>
<rect x="911" y="775" width="1" height="2"/>
<rect x="955" y="775" width="1" height="2"/>
<rect x="999" y="775" width="1" height="2"/>
<rect x="1044" y="775" width="1" height="2"/>
<text x="1092" y="547">30</text><text x="1092" y="625">20</text><text x="1092" y="703.5">10</text>
<text x="820" y="793">60</text><text x="864.5" y="793">50</text><text x="909" y="793">40</text><text x="953" y="793">30</text><text x="997.5" y="793">20</text><text x="1042" y="793">10</text><text x="1088" y="793">0</text><text x="1100" y="793">min</text>
</g>
</svg>
</body></html>
